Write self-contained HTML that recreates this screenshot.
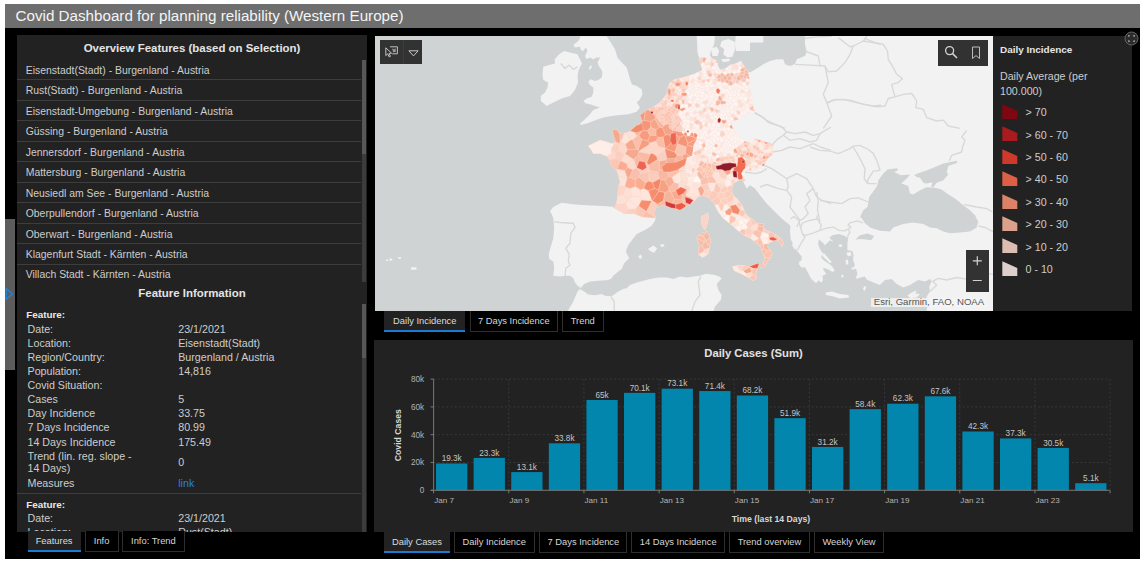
<!DOCTYPE html>
<html><head><meta charset="utf-8"><title>Covid Dashboard</title><style>
html,body{margin:0;padding:0;background:#fff;}
body{width:1146px;height:565px;overflow:hidden;position:relative;font-family:"Liberation Sans", sans-serif;color:#cfcfcf;}
.abs{position:absolute;}
#frame{position:absolute;left:5px;top:4px;width:1135px;height:555px;background:#000;overflow:hidden;}
#hdr{position:absolute;left:0;top:0;width:1135px;height:23.5px;background:#6e6e6e;}
#hdr span{position:absolute;left:10.5px;top:2px;font-size:15.2px;line-height:19px;color:#f4f4f4;white-space:nowrap;}
.panel{position:absolute;background:#222;}
.t{position:absolute;white-space:nowrap;}
.li{position:absolute;left:0;width:344px;height:19.47px;border-bottom:1px solid #3d3d3d;}
.li span{position:absolute;left:8.7px;top:4.9px;font-size:10.45px;line-height:12px;color:#cdcdcd;white-space:nowrap;}
.tab{position:absolute;box-sizing:border-box;height:21px;border:1px solid #2e2e2e;border-top:none;background:#000;color:#d6d6d6;font-size:9.35px;line-height:20.5px;text-align:center;white-space:nowrap;}
.tab.on{background:#222;border:none;border-bottom:2px solid #1c7ad0;color:#dcdcdc;}
.fl{position:absolute;left:10.5px;font-size:10.7px;line-height:12px;color:#cdcdcd;white-space:nowrap;}
.fv{position:absolute;left:161.2px;font-size:10.7px;line-height:12px;color:#cdcdcd;white-space:nowrap;}
.fb{position:absolute;left:9.2px;font-size:9.9px;line-height:12px;color:#e8e8e8;font-weight:bold;white-space:nowrap;}
</style></head><body>
<div id="frame">
<div id="hdr"><span>Covid Dashboard for planning reliability (Western Europe)</span></div>
<div class="abs" style="left:0;top:215px;width:10px;height:151px;background:#5c5c5c;"></div>
<svg class="abs" style="left:0;top:283px" width="10" height="14" viewBox="0 0 10 14"><path d="M1.2 1.5 L7.5 7 L1.2 12.5 Z" fill="none" stroke="#1f86e0" stroke-width="1.2"/></svg>
<div class="panel" style="left:12px;top:31px;width:350px;height:496.5px;overflow:hidden;">
<div class="t" style="left:0;width:350px;text-align:center;top:6px;font-size:11.45px;line-height:14px;font-weight:bold;color:#e4e4e4;">Overview Features (based on Selection)</div>
<div class="li" style="top:24.90px;"><span>Eisenstadt(Stadt) - Burgenland - Austria</span></div>
<div class="li" style="top:45.37px;"><span>Rust(Stadt) - Burgenland - Austria</span></div>
<div class="li" style="top:65.84px;"><span>Eisenstadt-Umgebung - Burgenland - Austria</span></div>
<div class="li" style="top:86.31px;"><span>Güssing - Burgenland - Austria</span></div>
<div class="li" style="top:106.78px;"><span>Jennersdorf - Burgenland - Austria</span></div>
<div class="li" style="top:127.25px;"><span>Mattersburg - Burgenland - Austria</span></div>
<div class="li" style="top:147.72px;"><span>Neusiedl am See - Burgenland - Austria</span></div>
<div class="li" style="top:168.19px;"><span>Oberpullendorf - Burgenland - Austria</span></div>
<div class="li" style="top:188.66px;"><span>Oberwart - Burgenland - Austria</span></div>
<div class="li" style="top:209.13px;"><span>Klagenfurt Stadt - Kärnten - Austria</span></div>
<div class="li" style="top:229.60px;border-bottom:none;"><span>Villach Stadt - Kärnten - Austria</span></div>
<div class="abs" style="left:344.6px;top:24.5px;width:4.8px;height:222.5px;background:#3c3c3c;"></div>
<div class="abs" style="left:344.6px;top:24.5px;width:4.8px;height:94.5px;background:#575757;"></div>
<div class="t" style="left:0;width:350px;text-align:center;top:251px;font-size:11.45px;line-height:14px;font-weight:bold;color:#e4e4e4;">Feature Information</div>
<div class="abs" style="left:344.6px;top:269px;width:4.8px;height:228px;background:#3c3c3c;"></div>
<div class="abs" style="left:344.6px;top:269px;width:4.8px;height:54px;background:#575757;"></div>
<div class="fb" style="top:274.00px">Feature:</div>
<div class="fl" style="top:287.50px">Date:</div>
<div class="fv" style="top:287.50px;">23/1/2021</div>
<div class="fl" style="top:301.60px">Location:</div>
<div class="fv" style="top:301.60px;">Eisenstadt(Stadt)</div>
<div class="fl" style="top:315.70px">Region/Country:</div>
<div class="fv" style="top:315.70px;">Burgenland / Austria</div>
<div class="fl" style="top:329.80px">Population:</div>
<div class="fv" style="top:329.80px;">14,816</div>
<div class="fl" style="top:343.90px">Covid Situation:</div>
<div class="fl" style="top:358.00px">Cases</div>
<div class="fv" style="top:358.00px;">5</div>
<div class="fl" style="top:372.20px">Day Incidence</div>
<div class="fv" style="top:372.20px;">33.75</div>
<div class="fl" style="top:386.40px">7 Days Incidence</div>
<div class="fv" style="top:386.40px;">80.99</div>
<div class="fl" style="top:400.60px">14 Days Incidence</div>
<div class="fv" style="top:400.60px;">175.49</div>
<div class="fl" style="top:415.20px">Trend (lin. reg. slope -</div>
<div class="fl" style="top:427.30px">14 Days)</div>
<div class="fv" style="top:420.80px">0</div>
<div class="fl" style="top:441.80px">Measures</div>
<div class="fv" style="top:441.80px;color:#2a7fe6;">link</div>
<div class="abs" style="left:0;top:458.3px;width:344px;height:1px;background:#3d3d3d;"></div>
<div class="fb" style="top:464.00px">Feature:</div>
<div class="fl" style="top:477.20px">Date:</div>
<div class="fv" style="top:477.20px;">23/1/2021</div>
<div class="fl" style="top:491.30px">Location:</div>
<div class="fv" style="top:491.30px;">Rust(Stadt)</div>
</div>
<div class="tab on" style="left:22.60px;top:527.00px;width:53.00px;">Features</div>
<div class="tab" style="left:79.50px;top:527.00px;width:34.20px;">Info</div>
<div class="tab" style="left:117.20px;top:527.00px;width:62.40px;">Info: Trend</div>
<div class="abs" id="map" style="left:370px;top:31.7px;width:618.4px;height:275.3px;background:#cfd3d4;overflow:hidden;">
<svg class="abs" style="left:0;top:0" width="619" height="275.3" viewBox="375 35.7 619 275.3">
<path d="M727.5,57.3 732.5,56.5 735.0,49.0 734.7,41.5 728.3,38.7 721.7,40.7 720.0,45.7 724.2,49.0 723.3,54.0ZM712.3,47.8 714.2,44.0 715.0,35.0 696.7,35.0 697.2,45.0 697.5,52.0 699.0,57.5 700.0,62.0 701.5,66.0 702.5,70.0 698.3,71.7 693.3,74.2 687.5,75.8 681.7,77.5 674.2,79.2 670.0,82.5 667.5,87.5 666.7,93.3 662.5,99.2 658.3,103.3 651.7,107.5 646.7,110.0 640.0,115.0 642.5,121.7 636.7,125.0 630.0,130.8 626.7,132.5 620.0,133.3 617.5,130.0 612.5,129.2 613.3,134.2 615.8,141.7 610.8,143.3 606.7,141.7 600.0,140.0 593.3,143.3 588.3,145.8 591.7,150.0 593.3,153.3 600.0,153.3 606.7,155.8 610.0,160.8 610.8,165.0 616.7,170.0 618.3,175.0 620.0,181.7 618.3,186.7 617.5,195.0 616.7,201.7 615.0,206.7 603.3,205.8 586.7,205.0 575.0,204.2 561.7,202.5 553.3,206.7 550.0,210.8 551.7,214.0 553.3,218.0 554.2,228.0 553.3,238.0 550.8,246.3 548.7,253.8 549.2,258.8 553.3,261.3 554.2,268.0 553.3,275.5 560.0,276.3 565.0,275.5 570.0,275.5 573.3,278.0 575.0,282.2 577.5,285.5 580.8,287.7 584.2,283.8 590.0,281.3 598.3,280.5 606.7,280.0 610.8,278.8 613.3,275.5 618.3,271.3 621.7,268.8 624.2,263.0 629.2,258.0 625.8,251.3 628.3,244.7 633.3,238.0 636.7,233.8 645.0,229.7 651.7,225.5 655.0,220.5 655.8,218.0 654.2,213.3 655.8,207.5 661.7,205.0 666.7,205.8 673.3,208.3 680.0,210.0 685.0,206.7 690.0,204.2 695.0,200.0 697.5,196.7 702.5,195.0 708.3,197.5 713.3,201.7 715.8,206.7 718.3,211.7 723.3,218.3 723.3,218.0 731.7,224.7 738.3,230.5 745.0,235.5 751.7,238.8 755.8,243.0 760.8,246.3 762.5,253.0 765.0,258.0 763.3,263.0 760.0,266.3 760.8,268.0 764.2,267.2 767.5,261.3 770.8,257.2 772.5,253.0 770.0,249.7 767.5,246.3 768.3,243.0 773.3,240.5 776.7,239.7 780.0,243.0 782.5,246.3 783.3,243.0 780.0,237.2 775.0,233.8 770.0,231.3 765.0,229.7 763.3,225.5 764.2,223.0 758.3,223.8 755.0,221.3 752.5,219.3 746.7,215.0 744.2,210.0 741.7,204.2 736.7,198.3 733.3,195.0 731.7,190.0 733.3,183.3 738.3,180.0 742.0,179.2 746.7,188.3 750.0,185.0 755.0,188.3 760.0,195.0 766.7,203.3 773.3,210.0 781.7,218.3 790.0,225.0 790.5,226.2 790.0,230.0 790.6,238.7 793.7,244.9 797.5,251.2 801.8,256.2 801.3,260.7 801.2,260.5 798.7,261.8 799.3,263.1 798.7,263.7 801.8,267.4 805.0,266.8 808.7,273.6 811.2,278.6 816.2,283.0 818.7,279.9 821.2,282.4 823.0,279.9 822.4,275.5 826.2,273.6 823.7,269.9 823.0,267.4 827.4,268.7 832.4,271.8 834.9,269.9 831.2,264.9 828.0,263.0 823.7,259.9 821.2,257.4 822.1,253.8 822.4,255.6 826.2,259.3 829.9,263.0 831.8,261.8 828.0,257.4 824.3,253.1 822.4,252.6 822.4,252.4 819.9,248.7 818.1,243.7 818.7,239.3 823.0,242.5 824.9,244.9 826.8,243.1 829.9,240.0 833.7,241.8 829.3,237.5 832.4,235.0 838.6,233.7 844.9,235.6 848.0,238.1 847.4,243.7 847.4,249.9 852.4,250.6 853.6,254.9 853.0,259.9 854.9,264.3 853.8,267.0 851.1,267.4 851.7,269.3 855.5,268.7 855.4,268.3 856.1,268.7 857.4,273.6 855.5,278.6 859.9,277.4 864.9,276.1 867.3,279.9 868.3,280.0 873.3,282.2 880.0,284.7 885.0,279.7 891.7,278.8 896.7,283.8 903.3,287.2 910.0,284.7 918.3,279.7 925.0,281.3 930.0,278.8 931.7,281.3 929.2,286.3 930.0,291.3 926.7,296.3 927.5,304.7 926.7,311.3 994.0,312.0 994.0,35.0 805.0,35.0 805.0,44.0 806.7,51.5 805.0,55.7 796.7,59.0 795.0,63.7 790.0,65.7 785.0,64.0 783.3,59.0 776.7,59.0 770.0,60.7 763.3,64.0 756.7,68.2 750.0,72.3 747.5,70.7 743.3,64.8 740.8,60.7 738.3,62.3 734.2,64.0 730.0,64.8 725.8,68.2 720.0,69.8 717.5,64.8 718.3,60.7 713.3,59.0 710.0,55.7 710.8,50.7 711.2,49.9 712.5,55.7 717.5,55.7 719.2,50.7 716.7,46.5ZM943.3,163.3 956.7,160.5 957.5,162.5 948.3,165.8 946.7,171.7 948.3,174.2 943.3,180.0 936.7,182.5 933.3,186.7 931.3,186.7 932.5,182.0 926.7,183.3 923.3,182.5 920.0,177.5 916.7,176.7 914.2,174.7 918.3,173.0 925.0,170.8 933.3,167.5ZM900.8,175.0 910.0,174.2 906.7,178.3 901.3,183.3 908.3,185.8 910.0,193.3 913.3,194.2 920.0,190.0 926.7,187.0 935.0,187.5 941.7,189.2 948.3,194.2 955.0,198.3 963.3,205.0 970.0,210.0 975.0,215.0 977.5,220.0 978.3,221.3 976.7,227.2 970.0,231.3 960.0,232.2 950.0,233.0 943.3,231.3 936.7,228.0 930.0,227.2 923.3,223.8 913.3,222.2 903.3,223.8 893.3,227.2 890.0,231.3 880.0,230.5 870.0,227.2 865.0,223.0 861.7,218.0 860.0,216.7 863.3,210.0 867.5,206.7 869.2,196.7 874.2,190.0 877.5,185.0 878.3,180.0 883.3,173.3 887.5,169.2 896.7,168.0 898.3,169.7 894.2,171.7ZM871.1,240.0 861.1,238.7 855.5,239.3 859.9,235.0 867.3,233.1 874.2,235.6ZM723.3,62.0 730.0,60.7 729.2,58.2 720.8,59.0ZM590.0,69.8 592.0,66.5 590.8,64.8 588.7,68.2ZM543.3,66.5 542.5,74.0 543.3,79.8 548.3,82.3 547.5,87.3 545.0,92.3 540.8,95.7 540.8,100.7 546.7,105.7 553.3,102.3 561.7,98.2 570.0,95.7 575.0,89.8 578.0,82.3 577.5,75.7 578.7,69.8 582.0,63.2 577.5,54.0 570.0,52.3 564.2,50.7 559.2,54.0 554.7,59.0 555.0,63.2 549.2,64.8ZM580.0,46.5 580.8,49.8 583.3,50.7 585.8,47.3 587.5,50.7 585.0,55.7 586.7,59.0 590.0,57.3 593.3,59.0 596.7,57.3 600.0,57.3 597.5,62.3 599.2,66.5 601.7,69.8 602.5,73.2 601.7,77.3 598.3,79.8 595.0,80.7 590.8,79.0 588.3,81.5 590.0,84.8 593.3,87.3 593.3,92.3 591.7,96.5 586.7,98.2 583.3,100.7 585.8,103.2 590.0,104.0 595.0,105.7 600.0,107.3 593.3,109.8 590.0,114.0 585.0,119.0 580.0,123.2 580.8,124.8 586.7,123.2 593.3,120.7 598.3,119.0 603.3,117.3 611.7,115.7 620.0,114.8 628.3,114.0 636.7,111.5 640.0,107.3 636.7,102.3 640.0,99.0 642.5,94.0 641.7,89.0 636.7,85.7 631.7,84.0 629.2,75.7 626.7,67.3 621.7,62.3 617.5,57.3 615.0,49.0 610.8,42.3 606.7,36.0 580.0,36.0 580.0,38.2 577.5,41.5 573.3,44.8 575.0,47.3ZM708.7,218.3 708.0,211.7 706.7,213.3 701.7,215.8 700.8,221.7 702.5,226.7 705.3,230.0 707.5,223.3ZM709.2,248.8 710.8,239.7 707.5,231.3 703.3,232.2 696.7,236.3 699.2,244.7 698.3,253.8 702.5,257.2 708.3,253.8ZM661.3,246.7 664.7,246.0 663.3,243.8 660.0,244.3ZM648.0,248.8 650.8,251.3 654.2,252.5 657.2,248.0 653.3,245.2ZM640.0,259.3 642.2,256.7 640.8,254.3 638.3,256.0ZM398.5,258.8 401.0,258.5 401.0,256.8 398.0,257.0ZM389.5,260.5 392.5,260.0 392.0,258.2 389.0,258.5ZM386.0,260.8 388.0,260.8 388.0,259.3 386.0,259.5ZM411.0,269.5 416.5,269.5 416.5,267.0 411.0,267.0ZM750.0,42.3 763.3,42.3 763.3,35.0 735.8,35.0 735.0,44.0 735.8,50.7 750.0,50.7ZM839.3,246.8 842.1,246.4 841.8,243.9 838.6,244.3ZM794.3,249.3 795.6,248.7 793.1,243.7 791.9,244.3ZM848.0,256.2 851.7,254.9 850.5,251.8 846.1,252.4ZM846.1,264.3 848.4,264.3 848.0,259.3 845.5,259.9ZM756.7,278.0 755.8,273.8 757.5,268.0 759.2,263.0 755.8,263.8 748.3,266.3 740.0,264.7 732.5,266.3 734.2,270.5 740.0,273.0 746.7,276.3 753.3,280.5ZM841.8,277.4 843.6,276.8 843.0,274.3 841.1,274.9ZM864.2,291.3 866.3,287.2 865.0,285.5 863.0,288.0ZM720.8,299.7 721.7,294.7 718.3,289.7 716.7,283.8 721.7,278.0 719.2,276.3 715.0,274.7 708.3,273.8 705.0,273.8 700.0,275.5 693.3,276.3 686.7,277.2 680.0,276.3 673.3,278.8 666.7,277.2 658.3,277.2 650.0,278.8 643.3,280.5 636.7,282.2 630.0,284.7 626.7,288.0 623.3,288.8 618.3,291.3 611.7,296.0 605.0,295.5 601.7,293.8 595.0,295.0 588.3,294.3 584.2,291.3 580.0,288.8 577.5,291.3 573.3,301.3 567.5,311.3 560.0,312.0 994.0,312.0 713.3,311.3 715.0,306.3ZM916.7,290.0 911.7,292.2 907.5,295.0 910.0,297.7 916.7,297.2 920.0,293.8 915.3,293.3ZM848.3,294.7 840.0,293.8 831.7,291.3 825.8,292.2 825.8,294.7 831.7,295.8 840.0,298.3 849.2,297.2Z" fill="#f2f2f2"/>
<g fill="none" stroke="#d8d8d6" stroke-width="1.35" stroke-linejoin="round">
<polyline points="554.2,221.3 560.0,222.2 573.3,223.0 575.0,227.2 570.8,233.0 570.0,243.0 565.8,248.0 569.2,253.8 568.3,261.3 570.0,264.7 565.8,268.0 565.0,275.5"/>
<polyline points="610.8,296.0 614.2,301.3 614.2,311.3"/>
<polyline points="700.8,276.3 698.3,281.3 700.0,294.7 695.0,301.3 691.7,311.3"/>
<polyline points="560.8,63.2 565.0,68.2 569.2,64.8 573.3,69.0 577.5,66.5"/>
<polyline points="754.2,112.3 763.3,117.3 768.3,122.3 776.7,124.8 785.0,128.0"/>
<polyline points="795.0,64.0 810.0,64.8 825.0,65.7 828.3,82.3 823.3,94.0 826.7,102.3 831.7,115.7 823.3,128.0"/>
<polyline points="805.0,50.7 818.3,55.7 820.0,64.8"/>
<polyline points="825.0,65.7 828.3,71.5 836.7,70.7 845.0,62.3 850.0,54.0 853.3,45.7 863.3,40.7 866.7,36.0"/>
<polyline points="805.0,38.2 816.7,36.5 831.7,36.0"/>
<polyline points="838.3,37.3 850.0,46.5 853.3,45.7"/>
<polyline points="826.7,102.3 836.7,99.0 850.0,99.8 863.3,104.0 873.3,105.7 881.0,104.8"/>
<polyline points="863.3,40.7 873.3,42.3 881.0,44.0"/>
<polyline points="865.0,38.2 875.0,42.3 883.3,44.0 887.5,50.7 888.3,59.0 893.3,67.3 896.7,74.0 902.5,78.2 898.3,82.3 891.7,84.0 893.3,90.7 895.0,96.5"/>
<polyline points="827.5,103.2 832.5,99.8 843.3,99.0 856.7,102.3 868.3,104.8 876.7,106.5 885.0,105.7 888.3,98.2 895.0,96.5 903.3,94.0 911.7,93.2 916.7,100.7 915.8,107.3 923.3,109.0 926.7,117.3 936.7,120.7 943.3,119.8 948.3,125.7 960.0,128.0"/>
<polyline points="966.7,130.0 961.7,136.7 965.0,140.0 962.5,146.7 961.7,151.7 951.7,155.0 949.2,160.8"/>
<polyline points="810.0,146.7 820.0,150.0 830.0,150.8 838.3,153.3 850.0,148.3 853.3,145.8 860.0,145.0 868.3,149.2 873.3,153.3 876.7,160.0 880.0,170.0 873.3,170.8 867.5,180.0 868.3,183.3 876.7,183.3"/>
<polyline points="853.3,146.7 860.0,158.3 865.0,168.3 864.2,178.3 867.5,183.3"/>
<polyline points="820.0,200.0 830.0,201.7 841.7,203.3 850.0,198.3 858.3,197.5 868.3,201.7"/>
<polyline points="816.7,191.7 818.3,200.0 817.5,210.0 820.0,221.7"/>
<polyline points="964.2,204.2 976.7,206.7 986.7,208.3 992.5,211.7"/>
<polyline points="754.2,111.7 760.0,115.0 766.7,120.0 773.3,123.3 781.7,126.7 786.7,131.7 783.3,135.0 778.3,138.3 773.3,143.3 771.7,146.7"/>
<polyline points="786.7,131.7 795.0,133.3 805.0,131.7 813.3,135.0 820.0,133.3 831.0,126.7"/>
<polyline points="783.3,135.0 790.0,140.0 800.0,138.3 810.0,141.7 816.7,140.0 820.0,133.3"/>
<polyline points="772.5,151.7 781.7,150.0 790.0,146.7 800.0,148.3 813.3,143.3 820.0,146.7 831.0,150.0"/>
<polyline points="764.2,165.0 771.7,168.3 781.7,175.0 786.7,178.3 796.7,173.3 806.7,178.3 813.3,188.3 816.7,196.7 821.7,200.0 831.0,203.3"/>
<polyline points="760.0,186.7 766.7,184.2 778.3,188.3 786.7,190.0 791.7,196.7 790.0,206.7 795.0,213.3 800.0,220.0 796.7,226.7"/>
<polyline points="786.7,178.3 788.3,186.7 786.7,190.0"/>
<polyline points="745.0,171.7 755.0,173.3 761.7,171.7 766.7,168.3"/>
<polyline points="813.3,188.3 806.7,193.3 810.0,200.0 805.0,206.7 808.3,213.3 803.3,218.3 800.0,220.0"/>
<polyline points="790.6,218.7 793.7,216.2 798.7,220.0 800.6,227.5 802.5,233.7 805.0,236.8 800.6,243.7 797.5,249.9"/>
<polyline points="800.6,227.5 802.5,222.5 809.9,220.0 817.4,218.7 821.2,225.0 819.9,230.0 812.4,233.1 805.0,235.0 802.5,233.7"/>
<polyline points="819.9,230.0 827.4,227.5 833.7,226.9 838.6,230.0 844.9,230.6 848.0,228.7 851.1,226.9 848.0,225.0 849.9,222.5 857.4,220.6 863.0,222.5"/>
<polyline points="817.4,218.7 816.8,215.0"/>
<polyline points="848.0,228.7 849.9,231.8 848.0,235.0 847.4,238.1"/>
<polyline points="932.5,281.0 938.3,278.0 946.7,279.7 956.7,277.2 966.7,278.8 976.7,274.7 986.7,273.0 993.0,273.8"/>
<polyline points="978.3,225.5 985.0,227.2 993.0,231.3"/>
<polyline points="930.0,291.3 936.7,284.7 932.5,281.0"/>
</g>
<path d="M692.7,197.5 686.4,195.2 687.2,191.0 684.3,186.3 688.1,182.1 687.7,176.6 685.6,170.5 679.6,173.0 679.6,168.7 686.0,163.1 687.2,157.5 692.3,155.7 694.0,144.3 697.4,138.3 690.6,135.7 685.1,135.7 681.8,131.8 677.1,130.8 673.7,130.1 669.1,127.5 669.1,122.9 663.6,124.9 658.9,120.3 654.3,114.5 649.6,110.4 648.2,109.2 646.7,110.0 640.0,115.0 642.5,121.7 636.7,125.0 630.0,130.8 626.7,132.5 620.0,133.3 617.5,130.0 612.5,129.2 613.3,134.2 615.8,141.7 610.8,143.3 606.7,141.7 600.0,140.0 593.3,143.3 588.3,145.8 591.7,150.0 593.3,153.3 600.0,153.3 606.7,155.8 610.0,160.8 610.8,165.0 616.7,170.0 618.3,175.0 620.0,181.7 618.3,186.7 617.5,195.0 616.7,201.7 615.0,206.7 612.6,206.5 613.1,206.9 623.9,213.3 634.0,213.3 642.5,216.7 654.9,217.5 655.5,219.0 655.8,218.0 654.2,213.3 655.8,207.5 661.7,205.0 666.7,205.8 673.3,208.3 680.0,210.0 685.0,206.7 690.0,204.2 691.5,202.9 691.5,201.7Z" fill="#f9c0ab"/>
<g stroke="#fcd9cc" stroke-width="0.35">
<path d="M652.2,152.9 652.3,150.5 649.1,144.3 638.9,150.8 639.0,151.6 649.9,154.0Z" fill="#fcd8cb"/>
<path d="M631.3,196.5 628.5,199.3 637.8,206.2 638.6,205.8 641.6,199.7 639.8,195.7Z" fill="#ffe6dd"/>
<path d="M677.3,143.4 686.0,146.7 687.5,144.8 687.9,143.1 685.2,135.7 685.1,135.7 684.5,135.0 679.8,136.9 677.2,143.2Z" fill="#f59476"/>
<path d="M625.5,203.3 628.2,199.4 623.1,194.4 617.5,195.2 616.7,201.7 615.8,204.4Z" fill="#fce1d6"/>
<path d="M665.5,148.2 665.0,147.6 658.5,146.1 652.3,150.5 652.2,152.9 656.5,155.9 665.1,149.6 665.5,148.3Z" fill="#ffd7c8"/>
<path d="M643.9,120.0 650.7,121.6 654.9,118.4 655.9,116.5 654.3,114.5 649.6,110.4 648.2,109.2 646.7,110.0 645.2,111.1Z" fill="#f7a287"/>
<path d="M656.5,155.9 657.5,159.3 659.3,160.9 665.8,159.7 666.9,158.2 665.1,149.6Z" fill="#f8d0c1"/>
<path d="M627.0,177.6 627.3,177.4 624.8,170.1 617.2,168.8 616.2,169.6 616.7,170.0 618.3,175.0 618.7,176.5Z" fill="#fbe2d8"/>
<path d="M632.5,139.4 636.5,148.8 638.2,149.9 642.1,139.2 639.0,135.5 636.8,135.8Z" fill="#fabeaa"/>
<path d="M668.8,187.7 668.6,190.6 671.3,192.0 678.9,189.1 678.6,183.1 674.2,182.1Z" fill="#f9bca7"/>
<path d="M638.6,205.8 645.9,211.0 646.7,211.0 652.0,200.5 641.6,199.7Z" fill="#f88d6d"/>
<path d="M665.6,134.5 663.0,136.8 665.0,147.6 665.5,148.2 672.4,141.9 669.8,134.3Z" fill="#f48e71"/>
<path d="M635.4,186.3 630.2,188.2 631.3,196.5 639.8,195.7 640.9,189.6Z" fill="#ffe5dc"/>
<path d="M678.8,172.2 668.7,167.4 666.7,169.3 668.9,176.5 672.1,177.0Z" fill="#fac0ac"/>
<path d="M666.7,169.3 659.9,169.4 657.6,171.5 659.4,178.5 660.9,179.6 664.7,180.1 668.9,176.5Z" fill="#f9b8a2"/>
<path d="M657.5,159.3 656.5,155.9 652.2,152.9 649.9,154.0 646.6,162.7 648.8,165.0Z" fill="#f58a6a"/>
<path d="M635.1,179.3 635.4,186.3 640.9,189.6 643.8,188.2 645.8,182.7 639.0,176.7Z" fill="#faad92"/>
<path d="M627.0,177.6 624.9,185.7 626.1,187.2 630.2,188.2 635.4,186.3 635.1,179.3 629.8,177.0 627.3,177.4Z" fill="#fbae93"/>
<path d="M625.5,203.3 628.2,209.5 636.0,208.4 637.8,206.2 628.5,199.3 628.2,199.4Z" fill="#fde4dc"/>
<path d="M683.8,204.8 683.4,200.8 681.8,199.2 674.4,199.0 671.1,204.4 671.4,207.6 673.3,208.3 674.6,208.6Z" fill="#f9b69f"/>
<path d="M618.5,150.6 615.6,151.8 615.8,158.4 620.0,161.1 620.8,160.7 624.7,153.9Z" fill="#fbcebf"/>
<path d="M617.2,168.8 620.0,161.1 615.8,158.4 609.0,159.4 610.0,160.8 610.8,165.0 616.2,169.6Z" fill="#fbc7b5"/>
<path d="M647.7,140.6 649.2,142.9 655.7,141.1 658.1,137.0 656.0,134.9 649.9,134.9Z" fill="#f69f83"/>
<path d="M627.9,167.3 624.8,170.1 627.3,177.4 629.8,177.0 632.8,169.3Z" fill="#f6a98e"/>
<path d="M649.1,171.5 640.3,172.9 639.0,176.7 645.8,182.7 648.8,180.7Z" fill="#fac6b4"/>
<path d="M681.8,199.2 683.4,200.8 692.2,197.3 686.4,195.2 687.2,191.0 686.3,189.5 682.6,191.1Z" fill="#f9bca7"/>
<path d="M633.1,158.9 633.7,158.9 638.0,155.2 639.0,151.6 638.9,150.8 638.2,149.9 636.5,148.8 627.4,149.2 625.1,153.7Z" fill="#f6a98e"/>
<path d="M606.6,150.9 603.7,144.9 595.7,145.3 592.9,152.5 593.3,153.3 600.0,153.3 604.7,155.1Z" fill="#fcdcd0"/>
<path d="M656.0,129.5 659.7,127.0 654.9,118.4 650.7,121.6 650.6,127.1Z" fill="#f7a488"/>
<path d="M615.6,151.8 618.5,150.6 619.5,144.4 613.5,144.4 610.7,149.7Z" fill="#fbd0c1"/>
<path d="M636.5,167.9 636.9,168.1 644.7,162.4 638.0,155.2 633.7,158.9Z" fill="#f9b9a3"/>
<path d="M625.4,143.9 631.2,139.4 625.1,132.7 624.0,132.8 621.0,140.7 621.6,142.5Z" fill="#fee5db"/>
<path d="M650.7,121.6 643.9,120.0 642.2,120.8 642.5,121.7 639.5,123.4 642.4,130.3 647.4,130.4 650.6,127.1Z" fill="#f69577"/>
<path d="M646.7,211.0 645.9,211.0 641.8,216.5 642.5,216.7 654.9,217.5 655.5,219.0 655.8,218.0 655.7,217.6Z" fill="#fabfaa"/>
<path d="M681.3,180.8 678.6,183.1 678.9,189.1 682.6,191.1 686.3,189.5 684.3,186.3 687.1,183.2Z" fill="#f9dfd6"/>
<path d="M640.9,189.6 639.8,195.7 641.6,199.7 652.0,200.5 652.1,200.5 648.5,190.5 643.8,188.2Z" fill="#ffe6dd"/>
<path d="M687.5,144.8 686.0,146.7 685.5,153.2 691.0,156.2 692.3,155.7 693.7,146.5Z" fill="#f69c80"/>
<path d="M677.3,155.2 675.1,158.1 675.1,161.8 680.4,168.1 683.4,165.4 682.3,154.9Z" fill="#f9b69f"/>
<path d="M664.8,192.2 659.0,190.6 652.3,200.5 657.5,204.0 663.5,200.4Z" fill="#f58a6a"/>
<path d="M665.8,159.7 668.7,167.2 675.1,161.8 675.1,158.1 666.9,158.2Z" fill="#f8ac93"/>
<path d="M636.0,208.4 628.2,209.5 626.3,213.3 634.0,213.3 636.4,214.2Z" fill="#fbcebe"/>
<path d="M671.9,132.7 673.1,129.7 669.1,127.5 669.1,122.9 664.7,124.5 662.3,127.4 665.6,134.5 669.8,134.3Z" fill="#f7a388"/>
<path d="M671.9,132.7 679.8,136.9 684.5,135.0 681.8,131.8 677.1,130.8 673.7,130.1 673.1,129.7Z" fill="#f89779"/>
<path d="M621.6,142.5 621.0,140.7 614.2,136.7 615.8,141.7 612.7,142.7 613.5,144.4 619.5,144.4Z" fill="#fcd7ca"/>
<path d="M620.8,160.7 627.2,163.7 633.1,158.9 625.1,153.7 624.7,153.9Z" fill="#fcddd2"/>
<path d="M657.5,204.0 652.3,200.5 652.1,200.5 652.0,200.5 646.7,211.0 655.7,217.6 654.2,213.3 655.8,207.5 658.2,206.5Z" fill="#fbcfc0"/>
<path d="M650.1,170.4 648.8,165.0 646.6,162.7 644.7,162.4 636.9,168.1 640.3,172.9 649.1,171.5Z" fill="#fbcebf"/>
<path d="M636.8,135.8 639.0,135.5 642.4,130.3 639.5,123.4 636.7,125.0 631.7,129.3Z" fill="#f9bba6"/>
<path d="M620.0,161.1 617.2,168.8 624.8,170.1 627.9,167.3 627.2,163.7 620.8,160.7Z" fill="#f9ac91"/>
<path d="M659.9,169.4 659.3,160.9 657.5,159.3 648.8,165.0 650.1,170.4 657.6,171.5Z" fill="#f9bca7"/>
<path d="M645.9,211.0 638.6,205.8 637.8,206.2 636.0,208.4 636.4,214.2 641.8,216.5Z" fill="#fbc8b6"/>
<path d="M671.1,204.4 663.5,200.4 657.5,204.0 658.2,206.5 661.7,205.0 666.7,205.8 671.4,207.6Z" fill="#f9baa4"/>
<path d="M687.9,143.1 697.2,138.2 690.6,135.7 685.2,135.7Z" fill="#f89779"/>
<path d="M603.7,144.9 606.6,150.9 610.7,149.7 613.5,144.4 612.7,142.7 610.8,143.3 606.7,141.7 604.8,141.2Z" fill="#fef1ed"/>
<path d="M595.7,145.3 594.4,142.8 593.3,143.3 588.3,145.8 591.7,150.0 592.9,152.5Z" fill="#fef1ed"/>
<path d="M648.8,180.7 645.8,182.7 643.8,188.2 648.5,190.5 654.7,188.2 652.5,181.9Z" fill="#f88d6d"/>
<path d="M642.4,130.3 639.0,135.5 642.1,139.2 647.7,140.6 649.9,134.9 647.4,130.4Z" fill="#f69b7f"/>
<path d="M627.9,167.3 632.8,169.3 636.5,167.9 633.7,158.9 633.1,158.9 627.2,163.7Z" fill="#fcdbce"/>
<path d="M624.0,132.8 620.0,133.3 617.5,130.0 612.5,129.2 613.3,134.2 614.2,136.7 621.0,140.7Z" fill="#fac2af"/>
<path d="M625.1,153.7 627.4,149.2 625.4,143.9 621.6,142.5 619.5,144.4 618.5,150.6 624.7,153.9Z" fill="#fcd9cc"/>
<path d="M668.9,176.5 664.7,180.1 668.8,187.7 674.2,182.1 672.1,177.0Z" fill="#f8ae96"/>
<path d="M632.5,139.4 631.2,139.4 625.4,143.9 627.4,149.2 636.5,148.8Z" fill="#f5a88d"/>
<path d="M681.3,180.8 687.1,183.2 688.1,182.1 687.7,176.6 685.6,170.5 680.6,172.6Z" fill="#fce1d7"/>
<path d="M671.3,192.0 668.6,190.6 664.8,192.2 663.5,200.4 671.1,204.4 674.4,199.0Z" fill="#f8b39b"/>
<path d="M664.7,180.1 660.9,179.6 658.5,189.9 659.0,190.6 664.8,192.2 668.6,190.6 668.8,187.7Z" fill="#f6a084"/>
<path d="M654.7,188.2 658.5,189.9 660.9,179.6 659.4,178.5 652.5,181.9Z" fill="#f38868"/>
<path d="M623.1,194.4 626.1,187.2 624.9,185.7 618.8,185.2 618.3,186.7 617.5,195.0 617.5,195.2Z" fill="#fcd6c8"/>
<path d="M658.1,137.0 655.7,141.1 658.5,146.1 665.0,147.6 663.0,136.8Z" fill="#f9bda9"/>
<path d="M665.1,149.6 666.9,158.2 675.1,158.1 677.3,155.2 674.9,151.7 665.5,148.3Z" fill="#f19072"/>
<path d="M683.4,165.4 686.0,163.1 687.2,157.5 691.0,156.2 685.5,153.2 682.3,154.9Z" fill="#f7a58a"/>
<path d="M631.7,129.3 630.0,130.8 626.7,132.5 625.1,132.7 631.2,139.4 632.5,139.4 636.8,135.8Z" fill="#fbe2d8"/>
<path d="M687.9,143.1 687.5,144.8 693.7,146.5 694.0,144.3 697.4,138.3 697.2,138.2Z" fill="#fa997b"/>
<path d="M615.8,158.4 615.6,151.8 610.7,149.7 606.6,150.9 604.7,155.1 606.7,155.8 609.0,159.4Z" fill="#fcd7ca"/>
<path d="M671.3,192.0 674.4,199.0 681.8,199.2 682.6,191.1 678.9,189.1Z" fill="#f8ab91"/>
<path d="M658.5,146.1 655.7,141.1 649.2,142.9 649.1,144.3 652.3,150.5Z" fill="#ffd7c8"/>
<path d="M654.9,118.4 659.7,127.0 662.3,127.4 664.7,124.5 663.6,124.9 658.9,120.3 655.9,116.5Z" fill="#f9b59e"/>
<path d="M674.6,208.6 680.0,210.0 685.0,206.7 685.0,206.7 683.8,204.8Z" fill="#f9baa5"/>
<path d="M659.4,178.5 657.6,171.5 650.1,170.4 649.1,171.5 648.8,180.7 652.5,181.9Z" fill="#fbccbc"/>
<path d="M662.3,127.4 659.7,127.0 656.0,129.5 656.0,134.9 658.1,137.0 663.0,136.8 665.6,134.5Z" fill="#f69577"/>
<path d="M643.9,120.0 645.2,111.1 640.0,115.0 642.2,120.8Z" fill="#f5977a"/>
<path d="M638.2,149.9 638.9,150.8 649.1,144.3 649.2,142.9 647.7,140.6 642.1,139.2Z" fill="#f69d81"/>
<path d="M672.4,141.9 677.2,143.2 679.8,136.9 671.9,132.7 669.8,134.3Z" fill="#f7a287"/>
<path d="M628.2,199.4 628.5,199.3 631.3,196.5 630.2,188.2 626.1,187.2 623.1,194.4Z" fill="#fce0d6"/>
<path d="M647.4,130.4 649.9,134.9 656.0,134.9 656.0,129.5 650.6,127.1Z" fill="#f9bca7"/>
<path d="M675.1,161.8 668.7,167.2 668.7,167.4 678.8,172.2 679.6,172.0 679.6,168.7 680.4,168.1Z" fill="#f9bba6"/>
<path d="M668.7,167.2 665.8,159.7 659.3,160.9 659.9,169.4 666.7,169.3 668.7,167.4Z" fill="#f8ab92"/>
<path d="M678.8,172.2 672.1,177.0 674.2,182.1 678.6,183.1 681.3,180.8 680.6,172.6 679.6,173.0 679.6,172.0Z" fill="#ffe7de"/>
<path d="M685.5,153.2 686.0,146.7 677.3,143.4 674.9,151.7 677.3,155.2 682.3,154.9Z" fill="#fac5b3"/>
<path d="M683.4,200.8 683.8,204.8 685.0,206.7 690.0,204.2 691.5,202.9 691.5,201.7 692.7,197.5 692.2,197.3Z" fill="#f9bda8"/>
<path d="M632.8,169.3 629.8,177.0 635.1,179.3 639.0,176.7 640.3,172.9 636.9,168.1 636.5,167.9Z" fill="#fabfac"/>
<path d="M648.5,190.5 652.1,200.5 652.3,200.5 659.0,190.6 658.5,189.9 654.7,188.2Z" fill="#f88d6d"/>
<path d="M628.2,209.5 625.5,203.3 615.8,204.4 615.0,206.7 612.6,206.5 613.1,206.9 623.9,213.3 626.3,213.3Z" fill="#fcd6c8"/>
<path d="M604.8,141.2 600.0,140.0 594.4,142.8 595.7,145.3 603.7,144.9Z" fill="#fdefea"/>
<path d="M674.9,151.7 677.3,143.4 677.2,143.2 672.4,141.9 665.5,148.2 665.5,148.3Z" fill="#f9987a"/>
<path d="M644.7,162.4 646.6,162.7 649.9,154.0 639.0,151.6 638.0,155.2Z" fill="#f9b9a3"/>
<path d="M624.9,185.7 627.0,177.6 618.7,176.5 620.0,181.7 618.8,185.2Z" fill="#fde4da"/>
</g>
<path d="M654.3,114.5 658.9,120.3 663.6,124.9 669.1,122.9 669.1,127.5 673.7,130.1 677.1,130.8 681.8,131.8 683.0,127.5 680.1,122.9 682.2,120.3 678.8,114.9 676.3,114.3 677.5,109.6 670.4,105.5 664.0,106.6 656.6,106.6 653.3,106.5 651.7,107.5 648.9,108.9 649.6,110.4Z" fill="#fbd5c8"/>
<g stroke="#fbe0d6" stroke-width="0.35">
<path d="M671.1,117.5 668.5,118.9 668.4,120.6 672.0,120.7 672.3,119.5Z" fill="#fac1ae"/>
<path d="M676.7,112.7 677.5,109.6 676.6,109.0 675.0,111.5 675.0,112.1Z" fill="#fbc8b7"/>
<path d="M680.5,117.7 678.8,114.9 677.8,114.7 677.1,115.8 678.3,117.7Z" fill="#fac4b2"/>
<path d="M670.8,126.3 672.8,123.2 669.1,123.3 669.1,126.3Z" fill="#fac1ad"/>
<path d="M661.1,110.4 663.5,110.0 663.9,109.5 663.7,106.6 660.7,106.6Z" fill="#fac0ac"/>
<path d="M679.2,122.1 680.5,122.4 682.2,120.3 680.5,117.7 678.3,117.7 677.4,120.4Z" fill="#fbcbbb"/>
<path d="M655.1,112.8 655.8,109.2 655.7,109.1 649.0,109.1 649.6,110.4 652.9,113.3Z" fill="#fac2af"/>
<path d="M670.0,107.3 667.2,108.9 667.9,111.1 670.6,111.6 671.5,110.0Z" fill="#fac5b3"/>
<path d="M664.1,119.2 664.0,119.7 665.2,121.1 667.7,121.4 668.4,120.6 668.5,118.9 667.2,117.0 666.8,117.0Z" fill="#fac2af"/>
<path d="M664.5,114.8 663.2,116.5 664.1,119.2 666.8,117.0Z" fill="#fac5b3"/>
<path d="M676.4,120.3 673.2,122.9 673.2,123.0 675.2,125.2 679.2,122.1 677.4,120.4Z" fill="#fbcebf"/>
<path d="M672.4,128.0 670.8,126.3 669.1,126.3 669.1,127.5 672.1,129.2Z" fill="#fac0ac"/>
<path d="M655.1,112.8 657.1,113.9 660.0,111.4 657.2,109.2 655.8,109.2Z" fill="#fac5b3"/>
<path d="M660.2,111.3 661.4,113.2 664.5,114.0 665.4,112.9 663.5,110.0 661.1,110.4Z" fill="#fbd2c4"/>
<path d="M660.6,116.3 663.2,116.5 664.5,114.8 664.5,114.0 661.4,113.2Z" fill="#fac4b2"/>
<path d="M660.6,116.3 659.7,116.9 659.2,120.4 664.0,119.7 664.1,119.2 663.2,116.5Z" fill="#fbccbc"/>
<path d="M665.2,121.1 664.0,119.7 659.2,120.4 659.1,120.5 663.5,124.8Z" fill="#fbcaba"/>
<path d="M670.9,112.5 670.6,111.6 667.9,111.1 666.5,112.7 668.5,115.3 669.1,115.2Z" fill="#fac0ad"/>
<path d="M669.1,115.2 668.5,115.3 667.2,117.0 668.5,118.9 671.1,117.5 671.2,116.8Z" fill="#fabeaa"/>
<path d="M670.0,107.3 671.5,110.0 672.8,109.6 674.1,107.6 670.5,105.6Z" fill="#fbc9b8"/>
<path d="M679.2,122.1 675.2,125.2 675.5,126.6 676.6,127.6 677.5,127.6 680.7,123.9 680.1,122.9 680.5,122.4Z" fill="#fac3b0"/>
<path d="M673.2,123.0 672.8,123.2 670.8,126.3 672.4,128.0 675.5,126.6 675.2,125.2Z" fill="#fbd0c1"/>
<path d="M677.5,127.6 682.3,130.0 683.0,127.5 680.7,123.9Z" fill="#fbd1c3"/>
<path d="M672.0,120.7 668.4,120.6 667.7,121.4 668.3,123.2 669.1,122.9 669.1,123.3 672.8,123.2 673.2,123.0 673.2,122.9Z" fill="#fac1ad"/>
<path d="M676.0,130.6 677.1,130.8 681.8,131.8 682.3,130.0 677.5,127.6 676.6,127.6Z" fill="#fbccbd"/>
<path d="M657.3,114.7 657.1,113.9 655.1,112.8 652.9,113.3 654.3,114.5 655.8,116.4Z" fill="#fabfab"/>
<path d="M671.2,116.8 671.1,117.5 672.3,119.5 674.7,118.2 674.9,116.3 673.5,115.2Z" fill="#fbd2c3"/>
<path d="M676.6,109.0 674.1,107.6 672.8,109.6 675.0,111.5Z" fill="#fac1ae"/>
<path d="M674.7,118.2 672.3,119.5 672.0,120.7 673.2,122.9 676.4,120.3Z" fill="#fbd2c4"/>
<path d="M667.7,121.4 665.2,121.1 663.5,124.8 663.6,124.9 668.3,123.2Z" fill="#fbcaba"/>
<path d="M665.4,112.9 666.5,112.7 667.9,111.1 667.2,108.9 667.2,108.9 663.9,109.5 663.5,110.0Z" fill="#fbd0c1"/>
<path d="M660.7,106.6 658.9,106.6 657.2,109.2 660.0,111.4 660.2,111.3 661.1,110.4Z" fill="#fac5b2"/>
<path d="M667.2,108.9 670.0,107.3 670.5,105.6 670.4,105.5 666.0,106.3 667.2,108.9Z" fill="#fbd0c1"/>
<path d="M675.0,112.1 673.2,113.9 673.5,115.2 674.9,116.3 677.1,115.8 677.8,114.7 676.3,114.3 676.7,112.7Z" fill="#fbd0c1"/>
<path d="M670.9,112.5 669.1,115.2 671.2,116.8 673.5,115.2 673.2,113.9Z" fill="#fbc9b8"/>
<path d="M655.7,109.1 655.4,106.6 653.3,106.5 651.7,107.5 648.9,108.9 649.0,109.1Z" fill="#fac3b1"/>
<path d="M659.2,120.4 659.7,116.9 657.3,114.7 655.8,116.4 658.9,120.3 659.1,120.5Z" fill="#fbcbbb"/>
<path d="M675.0,112.1 675.0,111.5 672.8,109.6 671.5,110.0 670.6,111.6 670.9,112.5 673.2,113.9Z" fill="#fac6b4"/>
<path d="M663.9,109.5 667.2,108.9 666.0,106.3 664.0,106.6 663.7,106.6Z" fill="#fbcbbb"/>
<path d="M664.5,114.8 666.8,117.0 667.2,117.0 668.5,115.3 666.5,112.7 665.4,112.9 664.5,114.0Z" fill="#fac0ac"/>
<path d="M660.0,111.4 657.1,113.9 657.3,114.7 659.7,116.9 660.6,116.3 661.4,113.2 660.2,111.3Z" fill="#fbcfc0"/>
<path d="M657.2,109.2 658.9,106.6 656.6,106.6 655.4,106.6 655.7,109.1 655.8,109.2Z" fill="#fbd3c4"/>
<path d="M678.3,117.7 677.1,115.8 674.9,116.3 674.7,118.2 676.4,120.3 677.4,120.4Z" fill="#fbc7b5"/>
<path d="M676.6,127.6 675.5,126.6 672.4,128.0 672.1,129.2 673.7,130.1 676.0,130.6Z" fill="#fac4b2"/>
</g>
<path d="M664.0,106.6 670.4,105.5 677.5,109.6 676.3,114.3 678.8,114.9 678.8,111.6 680.5,106.2 678.8,100.1 684.7,99.4 687.7,94.6 684.7,90.4 687.7,89.0 688.9,80.6 688.9,75.7 688.6,75.5 687.5,75.8 681.7,77.5 674.2,79.2 670.0,82.5 667.5,87.5 666.7,93.3 662.5,99.2 658.3,103.3 655.2,105.3 656.6,106.6Z" fill="#f9b9a3"/>
<g stroke="#fbe0d6" stroke-width="0.35">
<path d="M686.1,81.4 688.9,80.3 688.9,75.7 688.6,75.5 687.5,75.8 682.8,77.2 684.7,81.1Z" fill="#fde6de"/>
<path d="M671.0,100.5 674.1,102.6 674.9,102.5 675.4,102.1 675.4,99.7 673.6,98.7Z" fill="#fdece6"/>
<path d="M686.1,81.4 685.8,85.3 688.2,85.7 688.9,80.6 688.9,80.3Z" fill="#fbcbbb"/>
<path d="M670.7,89.5 670.8,89.5 673.1,87.8 671.3,84.9 668.6,85.3 667.7,87.1Z" fill="#fcddd2"/>
<path d="M675.5,88.9 675.0,88.3 673.8,87.8 673.1,87.8 670.8,89.5 672.4,92.7 672.7,92.9 674.1,92.4Z" fill="#fac3b0"/>
<path d="M658.8,106.6 662.8,106.6 660.3,102.9 659.2,102.5 659.0,102.6Z" fill="#fde5dd"/>
<path d="M667.7,94.5 667.0,98.8 670.0,99.4 670.7,96.6Z" fill="#fbccbc"/>
<path d="M679.5,94.9 679.7,92.0 677.7,91.2 676.4,93.3 676.7,94.3Z" fill="#fdede7"/>
<path d="M675.7,95.8 676.7,94.3 676.4,93.3 674.1,92.4 672.7,92.9 673.0,96.0 673.1,96.1Z" fill="#fbcdbd"/>
<path d="M679.3,109.9 679.7,108.8 677.8,106.0 675.9,106.5 674.5,107.9 677.5,109.6 677.4,110.0Z" fill="#fde8e1"/>
<path d="M678.8,113.0 678.8,111.6 679.3,109.9 677.4,110.0 676.5,113.4Z" fill="#fbc9b9"/>
<path d="M682.8,85.5 681.8,83.9 678.9,85.5 679.9,88.0 681.2,88.4Z" fill="#fbd2c4"/>
<path d="M659.0,102.6 658.3,103.3 655.2,105.3 656.6,106.6 658.8,106.6Z" fill="#fce3da"/>
<path d="M680.2,81.3 678.8,78.1 677.7,78.4 675.6,81.7 675.7,83.0 677.4,83.9Z" fill="#fbcaba"/>
<path d="M682.3,91.3 682.8,93.3 684.9,94.6 686.7,93.2 685.2,91.1Z" fill="#fdece7"/>
<path d="M667.2,102.4 666.0,105.2 666.2,106.2 666.2,106.2 670.6,103.8 670.2,101.5Z" fill="#fde7df"/>
<path d="M670.7,89.5 667.7,87.1 667.5,87.5 666.7,93.3Z" fill="#fac2af"/>
<path d="M677.1,98.3 678.2,98.3 680.3,96.2 680.1,95.6 679.5,94.9 676.7,94.3 675.7,95.8Z" fill="#fcd9cd"/>
<path d="M667.2,102.4 666.3,99.4 663.9,100.6 663.7,102.4 666.0,105.2Z" fill="#fbccbc"/>
<path d="M675.4,102.1 674.9,102.5 675.9,106.5 677.8,106.0 678.1,105.6 677.5,102.5Z" fill="#fce0d6"/>
<path d="M663.9,100.6 666.3,99.4 666.3,99.3 663.9,97.2 662.5,99.2 662.3,99.4Z" fill="#fdede7"/>
<path d="M666.3,99.3 667.0,98.8 667.7,94.5 667.7,94.5 666.6,93.4 663.9,97.2Z" fill="#fcdfd5"/>
<path d="M685.8,85.3 685.4,85.8 685.6,88.1 686.8,89.5 687.7,89.0 688.2,85.7Z" fill="#fcdfd4"/>
<path d="M679.7,92.0 681.9,90.8 681.7,89.1 681.2,88.4 679.9,88.0 677.2,89.6 677.7,91.2Z" fill="#fdede8"/>
<path d="M675.7,83.0 675.0,83.4 673.8,87.8 675.0,88.3 677.9,85.0 677.4,83.9Z" fill="#fde4db"/>
<path d="M682.0,82.3 684.7,81.1 682.8,77.2 681.7,77.5 678.8,78.1 680.2,81.3Z" fill="#fdebe4"/>
<path d="M682.4,99.7 684.7,99.4 685.8,97.6 684.7,96.0 681.8,97.1Z" fill="#fdece6"/>
<path d="M685.4,85.8 685.8,85.3 686.1,81.4 684.7,81.1 682.0,82.3 681.8,83.9 682.8,85.5Z" fill="#fcdcd0"/>
<path d="M679.9,88.0 678.9,85.5 677.9,85.0 675.0,88.3 675.5,88.9 677.2,89.6Z" fill="#fdebe5"/>
<path d="M663.9,100.6 662.3,99.4 659.2,102.5 660.3,102.9 663.7,102.4Z" fill="#fcdace"/>
<path d="M671.1,81.6 670.0,82.5 668.6,85.3 671.3,84.9 672.0,83.4Z" fill="#fdece6"/>
<path d="M677.7,91.2 677.2,89.6 675.5,88.9 674.1,92.4 676.4,93.3Z" fill="#fce3da"/>
<path d="M682.0,82.3 680.2,81.3 677.4,83.9 677.9,85.0 678.9,85.5 681.8,83.9Z" fill="#fac3b0"/>
<path d="M680.3,96.2 681.8,97.1 684.7,96.0 684.9,94.6 682.8,93.3 680.1,95.6Z" fill="#fbcbba"/>
<path d="M663.7,102.4 660.3,102.9 662.8,106.6 664.0,106.6 666.2,106.2 666.0,105.2Z" fill="#fbd1c2"/>
<path d="M672.0,83.4 675.0,83.4 675.7,83.0 675.6,81.7 673.1,80.0 671.1,81.6Z" fill="#fbccbc"/>
<path d="M667.7,94.5 672.4,92.7 670.8,89.5 670.7,89.5 666.7,93.3 666.7,93.3 666.6,93.4Z" fill="#fbcebe"/>
<path d="M666.2,106.2 670.4,105.5 672.5,106.7 672.3,104.8 670.6,103.8Z" fill="#fde9e2"/>
<path d="M678.1,105.6 680.1,105.0 679.2,101.6 677.5,102.5Z" fill="#fbd3c4"/>
<path d="M675.6,81.7 677.7,78.4 674.2,79.2 673.1,80.0Z" fill="#fde7df"/>
<path d="M675.0,83.4 672.0,83.4 671.3,84.9 673.1,87.8 673.8,87.8Z" fill="#fce2d8"/>
<path d="M670.0,99.4 667.0,98.8 666.3,99.3 666.3,99.4 667.2,102.4 670.2,101.5 670.8,100.5Z" fill="#fcdfd5"/>
<path d="M684.9,94.6 684.7,96.0 685.8,97.6 687.7,94.6 686.7,93.2Z" fill="#fdeae4"/>
<path d="M681.8,97.1 680.3,96.2 678.2,98.3 679.1,100.1 682.4,99.7Z" fill="#fbd1c3"/>
<path d="M675.4,102.1 677.5,102.5 679.2,101.6 678.8,100.1 679.1,100.1 678.2,98.3 677.1,98.3 675.4,99.7Z" fill="#fbd0c2"/>
<path d="M673.6,98.7 675.4,99.7 677.1,98.3 675.7,95.8 673.1,96.1Z" fill="#fde8e1"/>
<path d="M676.5,113.4 676.3,114.3 678.8,114.9 678.8,113.0Z" fill="#fdebe5"/>
<path d="M670.8,100.5 670.2,101.5 670.6,103.8 672.3,104.8 674.1,102.6 671.0,100.5Z" fill="#fdebe5"/>
<path d="M678.1,105.6 677.8,106.0 679.7,108.8 680.5,106.2 680.1,105.0Z" fill="#fcd6c9"/>
<path d="M679.5,94.9 680.1,95.6 682.8,93.3 682.3,91.3 681.9,90.8 679.7,92.0Z" fill="#fdebe5"/>
<path d="M672.4,92.7 667.7,94.5 667.7,94.5 670.7,96.6 673.0,96.0 672.7,92.9Z" fill="#fbcdbe"/>
<path d="M681.7,89.1 685.6,88.1 685.4,85.8 682.8,85.5 681.2,88.4Z" fill="#fcd8ca"/>
<path d="M685.6,88.1 681.7,89.1 681.9,90.8 682.3,91.3 685.2,91.1 684.7,90.4 686.8,89.5Z" fill="#fac3b0"/>
<path d="M675.9,106.5 674.9,102.5 674.1,102.6 672.3,104.8 672.5,106.7 674.5,107.9Z" fill="#fac4b2"/>
<path d="M673.0,96.0 670.7,96.6 670.0,99.4 670.8,100.5 671.0,100.5 673.6,98.7 673.1,96.1Z" fill="#fcddd1"/>
</g>
<path d="M687.7,89.0 684.7,90.4 687.7,94.6 684.7,99.4 678.8,100.1 680.5,106.2 678.8,111.6 678.8,114.9 682.2,120.3 680.1,122.9 683.0,127.5 681.8,131.8 685.1,135.7 690.6,135.7 697.4,138.3 694.0,144.3 692.3,155.7 700.8,153.8 708.8,156.9 714.3,159.4 720.2,156.9 731.2,155.7 738.0,156.9 738.0,152.5 736.3,148.1 741.8,143.7 745.0,140.8 734.6,132.7 730.3,120.9 737.5,119.6 748.9,111.6 753.2,113.6 754.9,111.6 751.5,100.8 752.7,96.7 751.0,91.8 747.7,86.3 749.8,79.9 748.1,71.4 748.1,71.1 747.5,70.7 743.3,64.8 741.1,61.1 740.3,61.0 738.3,62.3 734.2,64.0 730.0,64.8 725.8,68.2 720.0,69.8 717.5,64.8 718.3,60.7 713.3,59.0 713.0,58.6 711.8,58.3 701.2,56.9 699.1,57.8 700.0,62.0 701.5,66.0 702.5,70.0 698.3,71.7 693.3,74.2 689.0,75.4 688.9,75.7 688.9,80.6Z" fill="#fdf0ec"/>
<g stroke="#f6e2db" stroke-width="0.35">
<path d="M734.0,73.8 731.8,72.0 729.7,73.5 729.9,75.4 731.5,76.6 733.3,76.3 733.9,75.5Z" fill="#fabaa4"/>
<path d="M745.7,101.9 744.7,101.6 742.5,102.6 742.2,103.1 743.3,105.7 745.3,106.0 746.4,102.6Z" fill="#fdede8"/>
<path d="M701.3,79.4 701.6,79.7 705.6,79.4 705.7,79.1 705.4,77.1 702.5,75.7 701.1,76.5Z" fill="#fdede7"/>
<path d="M710.1,138.9 710.6,135.8 709.1,134.7 706.7,136.6 706.9,138.7Z" fill="#fdebe5"/>
<path d="M704.0,91.0 705.2,94.1 708.3,93.5 708.2,92.0 705.4,89.1Z" fill="#fde9e2"/>
<path d="M727.8,145.5 728.2,144.2 727.0,141.9 723.5,141.7 723.4,141.8 723.8,143.1 726.9,145.8Z" fill="#fef4f1"/>
<path d="M704.5,83.0 701.6,81.9 700.6,82.9 700.8,85.6 704.5,85.2 705.0,84.2Z" fill="#fde7df"/>
<path d="M684.5,107.1 684.2,104.0 682.1,103.5 680.0,104.5 680.5,106.2 679.7,108.6Z" fill="#fef5f2"/>
<path d="M708.2,112.8 706.6,110.2 703.3,112.6 703.2,112.9 705.8,114.7 708.0,113.4Z" fill="#fef1ed"/>
<path d="M690.0,94.7 692.8,97.0 694.4,96.9 693.3,93.1 690.9,92.5Z" fill="#fef5f3"/>
<path d="M732.6,96.4 733.3,97.4 733.7,97.4 736.9,95.2 736.5,93.0 733.5,93.2 732.7,93.9Z" fill="#fef3f0"/>
<path d="M690.0,122.8 689.4,123.4 689.9,128.4 690.7,129.2 692.7,128.0 693.3,123.4Z" fill="#fce1d7"/>
<path d="M693.8,133.2 691.7,131.6 689.3,135.7 690.6,135.7 693.5,136.8Z" fill="#fb9a7c"/>
<path d="M730.2,147.0 727.8,145.5 726.9,145.8 725.9,147.4 728.0,149.7 728.9,149.7Z" fill="#fef3f0"/>
<path d="M736.7,142.3 734.8,143.1 734.5,144.0 736.3,147.6 736.8,147.6 739.7,145.3Z" fill="#fef1ed"/>
<path d="M695.7,151.1 695.8,151.1 699.4,149.3 699.6,148.4 698.4,146.5 695.4,147.7Z" fill="#fdf0ec"/>
<path d="M705.0,84.2 704.5,85.2 705.3,87.8 705.3,87.9 709.5,87.1 709.5,87.0 709.4,85.7 707.9,83.9Z" fill="#fef4f1"/>
<path d="M716.0,108.8 717.0,105.2 715.5,104.4 714.2,104.5 712.7,106.9 714.3,109.6Z" fill="#fef1ed"/>
<path d="M686.9,111.5 684.3,114.5 685.7,115.9 689.1,114.9 688.7,111.6Z" fill="#fcded3"/>
<path d="M715.3,96.2 714.2,97.1 713.6,98.8 713.8,99.4 716.0,100.6 718.3,100.0 718.0,96.6Z" fill="#fef2ef"/>
<path d="M712.9,151.6 717.0,153.7 717.5,153.5 716.6,149.6 716.2,149.4 713.2,150.4Z" fill="#fef1ed"/>
<path d="M749.2,98.1 747.9,97.8 745.7,101.9 746.4,102.6 748.8,103.0 750.6,99.6Z" fill="#fce2d8"/>
<path d="M699.8,105.0 702.1,102.7 699.5,100.4 697.5,101.0 697.1,102.8Z" fill="#fef2ee"/>
<path d="M698.2,89.5 695.2,90.5 695.0,91.9 697.4,93.8 699.2,93.4Z" fill="#fef4f1"/>
<path d="M684.5,107.1 679.7,108.6 679.4,109.5 682.0,111.3 685.3,109.5 685.3,107.9Z" fill="#f69e82"/>
<path d="M716.8,77.1 715.3,77.1 713.1,79.1 713.4,79.6 716.9,81.5 717.1,81.3 717.7,78.5Z" fill="#fcded2"/>
<path d="M747.9,97.8 749.2,98.1 751.9,94.3 751.8,93.9 748.9,93.5 746.6,96.5Z" fill="#fde8e0"/>
<path d="M682.1,103.5 684.2,104.0 684.3,103.9 684.9,99.9 684.5,99.4 681.6,99.8Z" fill="#f9bca7"/>
<path d="M715.2,86.6 715.2,86.7 716.4,91.7 717.5,91.9 720.0,89.8 716.5,85.6 716.0,85.5Z" fill="#fde6df"/>
<path d="M684.3,103.9 684.2,104.0 684.5,107.1 685.3,107.9 688.6,107.1 687.7,103.5Z" fill="#fef6f4"/>
<path d="M711.7,152.9 712.4,155.4 715.6,156.2 717.0,153.7 712.9,151.6Z" fill="#fabfab"/>
<path d="M736.8,72.3 739.2,73.6 740.8,71.1 740.4,69.6 738.1,68.6 736.0,69.6Z" fill="#fef3f0"/>
<path d="M740.3,65.5 741.8,62.3 741.1,61.1 740.3,61.0 738.3,62.3 735.9,63.3 736.3,64.7 738.6,65.9Z" fill="#fdeeea"/>
<path d="M733.2,108.1 734.7,106.2 732.8,103.0 730.2,105.0 730.1,105.4Z" fill="#fef5f2"/>
<path d="M699.6,106.4 699.6,106.4 696.4,107.3 695.9,110.2 697.8,112.2 697.8,112.2 699.8,110.2Z" fill="#fef4f1"/>
<path d="M723.5,141.7 727.0,141.9 729.3,139.4 729.2,138.9 727.2,138.0 723.9,139.9Z" fill="#fef1ed"/>
<path d="M727.2,138.0 729.2,138.9 730.7,137.1 728.2,134.0 725.6,134.8Z" fill="#fef5f3"/>
<path d="M729.2,68.9 726.8,70.4 727.5,72.6 729.7,73.5 731.8,72.0 731.9,70.2 731.1,69.1Z" fill="#fef1ed"/>
<path d="M709.2,94.2 708.3,93.5 705.2,94.1 704.1,95.0 703.9,96.4 707.7,99.3 708.1,99.3 709.1,98.0Z" fill="#fef3f0"/>
<path d="M744.9,88.0 744.1,89.7 744.6,92.0 747.8,91.5 749.2,88.7 749.0,88.4Z" fill="#fef5f3"/>
<path d="M726.7,122.1 728.1,126.5 729.5,126.4 731.5,124.1 730.9,122.4Z" fill="#fef1ed"/>
<path d="M714.1,129.4 711.5,130.1 711.5,131.1 713.9,133.6 715.2,133.4 716.3,131.3Z" fill="#fef4f1"/>
<path d="M713.9,141.9 713.4,141.7 710.8,144.1 713.5,146.1 714.0,145.9 715.2,143.8Z" fill="#fef3ef"/>
<path d="M741.7,85.4 740.2,88.1 740.9,89.2 744.1,89.7 744.9,88.0 744.1,86.0 741.8,85.3Z" fill="#fef2ef"/>
<path d="M716.1,62.0 713.8,63.0 713.9,65.2 715.7,65.8 717.8,63.5 717.9,63.0Z" fill="#fdf0ec"/>
<path d="M707.5,146.5 709.1,145.6 709.8,144.1 708.8,142.6 705.6,141.9 704.9,142.7 705.6,146.1Z" fill="#fef4f2"/>
<path d="M693.0,102.5 691.7,103.7 691.6,105.9 692.7,106.9 695.4,106.5 695.1,103.8Z" fill="#fef4f2"/>
<path d="M704.0,136.0 700.9,135.2 699.7,139.4 703.7,138.9Z" fill="#fef6f4"/>
<path d="M694.4,96.9 692.8,97.0 689.7,99.3 693.0,101.7 695.2,98.8 695.1,97.5 695.0,97.3Z" fill="#fdeae4"/>
<path d="M733.8,117.8 735.1,116.7 735.0,115.3 733.4,113.4 731.4,113.6 730.7,116.5Z" fill="#fcded3"/>
<path d="M740.0,80.2 736.5,79.3 735.9,79.6 735.5,82.6 737.7,83.7Z" fill="#f6cbbb"/>
<path d="M739.4,74.0 743.6,74.6 744.1,74.4 745.0,72.4 744.6,71.2 740.8,71.1 739.2,73.6Z" fill="#febea8"/>
<path d="M716.4,114.6 716.9,112.9 714.0,110.3 712.0,111.8 712.9,114.9Z" fill="#fef1ed"/>
<path d="M724.1,86.0 723.1,82.5 721.8,82.3 719.4,85.2 723.2,87.8 723.4,87.8Z" fill="#fef2ef"/>
<path d="M709.2,152.6 711.7,152.9 712.9,151.6 713.2,150.4 712.1,148.5 711.2,148.3 708.1,150.0 707.6,150.8Z" fill="#fef1ed"/>
<path d="M702.5,131.9 700.7,133.6 700.5,134.4 700.9,135.2 704.0,136.0 704.5,135.7 705.0,133.6Z" fill="#fef4f1"/>
<path d="M724.7,80.2 722.4,77.4 721.6,77.3 720.7,78.3 720.8,81.4 721.8,82.3 723.1,82.5 724.2,81.6Z" fill="#fbbba5"/>
<path d="M684.9,99.9 684.3,103.9 687.7,103.5 688.1,103.0 688.3,100.5Z" fill="#fce3da"/>
<path d="M736.8,72.3 734.0,73.8 733.9,75.5 737.0,76.5 739.1,75.0 739.4,74.0 739.2,73.6Z" fill="#ffd5c5"/>
<path d="M726.9,127.3 726.6,129.7 729.6,131.9 729.7,131.8 731.1,128.4 729.5,126.4 728.1,126.5Z" fill="#fef3f0"/>
<path d="M720.3,101.2 720.2,103.5 721.7,104.4 725.7,103.4 726.4,102.1 725.7,101.3 722.2,99.9Z" fill="#f4b49e"/>
<path d="M732.6,96.4 732.7,93.9 730.5,92.9 728.1,94.1 728.8,96.2Z" fill="#fef4f1"/>
<path d="M717.9,116.7 720.0,116.4 720.3,111.9 719.8,111.4 716.9,112.9 716.4,114.6Z" fill="#fdede7"/>
<path d="M709.9,116.6 709.3,118.0 713.2,119.9 714.3,118.7 712.9,115.0Z" fill="#fef2ef"/>
<path d="M699.2,93.4 697.4,93.8 695.0,97.3 695.1,97.5 699.7,97.5 699.7,93.6Z" fill="#fef4f1"/>
<path d="M728.4,97.2 726.4,97.9 725.7,101.3 726.4,102.1 727.3,102.1 730.0,100.3Z" fill="#fef2ee"/>
<path d="M681.3,124.8 683.0,127.5 682.8,128.3 684.9,127.9 685.7,127.0 685.4,125.9 682.7,124.2Z" fill="#fef2ef"/>
<path d="M715.2,86.7 712.4,90.1 713.1,92.3 714.9,92.6 716.4,91.7Z" fill="#fef2ee"/>
<path d="M719.6,95.1 718.0,96.6 718.3,100.0 720.3,101.2 722.2,99.9 722.4,98.0 720.2,95.1Z" fill="#f5b59f"/>
<path d="M691.7,131.6 690.6,129.5 686.6,132.2 687.2,135.7 689.3,135.7Z" fill="#fef6f4"/>
<path d="M706.2,126.8 705.0,129.7 707.2,131.8 709.8,128.4 709.6,127.3 707.7,126.6Z" fill="#fdf0ec"/>
<path d="M705.5,105.5 704.8,107.4 706.6,109.8 709.6,108.5 710.0,106.9Z" fill="#fde4db"/>
<path d="M688.6,107.1 685.3,107.9 685.3,109.5 686.9,111.5 688.7,111.6 688.9,111.4 689.6,109.6 688.7,107.1Z" fill="#fef5f3"/>
<path d="M730.2,105.0 727.3,102.1 726.4,102.1 725.7,103.4 726.0,106.6 729.0,106.6 730.1,105.4Z" fill="#fef1ed"/>
<path d="M722.2,93.4 720.9,89.8 720.0,89.8 717.5,91.9 719.6,95.1 720.2,95.1Z" fill="#fdede7"/>
<path d="M737.0,91.4 738.4,88.2 736.8,86.9 736.1,87.0 734.3,89.1Z" fill="#fef1ed"/>
<path d="M706.0,69.2 706.1,69.9 706.4,70.2 710.6,70.4 711.7,68.7 711.3,66.8 711.2,66.8 706.7,68.0Z" fill="#fde8e1"/>
<path d="M724.1,86.0 723.4,87.8 724.4,88.6 728.0,88.2 728.9,85.1 728.4,84.6Z" fill="#fdebe5"/>
<path d="M700.9,117.1 700.2,115.1 699.8,114.9 696.0,116.8 697.0,119.7 699.0,120.0Z" fill="#fef1ee"/>
<path d="M710.8,126.3 714.6,126.9 715.8,126.2 715.6,123.6 712.9,122.2 711.8,122.9Z" fill="#fef5f2"/>
<path d="M712.0,111.8 711.8,111.7 708.2,112.8 708.0,113.4 709.9,116.6 712.9,115.0 712.9,114.9Z" fill="#fef2ee"/>
<path d="M740.3,65.5 741.7,67.6 743.6,67.5 744.5,66.5 743.3,64.8 741.8,62.3Z" fill="#fcdfd5"/>
<path d="M697.3,76.9 699.7,76.0 698.6,71.6 698.3,71.7 694.6,73.6Z" fill="#fef5f2"/>
<path d="M704.5,154.2 706.5,150.9 704.3,149.5 701.7,151.8Z" fill="#fef2ef"/>
<path d="M700.8,85.6 700.6,82.9 697.8,82.3 696.6,83.9 698.1,86.7 699.2,87.5 699.4,87.5Z" fill="#fef4f2"/>
<path d="M718.1,70.0 715.6,69.5 714.8,70.0 714.9,72.7 718.5,74.0 719.1,73.7Z" fill="#fef6f4"/>
<path d="M744.7,101.6 743.7,98.5 740.2,99.6 742.5,102.6Z" fill="#fdf0ec"/>
<path d="M702.3,60.7 703.2,57.1 701.2,56.9 699.1,57.8 699.5,59.8Z" fill="#fbd2c4"/>
<path d="M704.0,62.0 702.8,61.6 700.6,63.7 701.5,66.0 701.8,67.2 702.0,67.2 704.5,64.6Z" fill="#fef3f0"/>
<path d="M743.3,105.7 742.2,103.1 738.4,104.7 738.2,105.7 738.6,106.6 741.3,107.6Z" fill="#fcdfd5"/>
<path d="M738.6,106.6 738.2,105.7 734.7,106.2 733.2,108.1 733.1,108.9 734.7,110.5 736.3,110.7 737.6,109.9Z" fill="#fdede8"/>
<path d="M697.6,130.5 697.7,129.5 695.4,127.9 692.7,128.0 690.7,129.2 690.6,129.5 691.7,131.6 693.8,133.2 695.7,132.8Z" fill="#fdf0ec"/>
<path d="M711.9,74.2 710.6,77.2 710.7,78.1 713.1,79.1 715.3,77.1 713.3,74.0Z" fill="#fef1ee"/>
<path d="M729.5,126.4 731.1,128.4 733.1,128.6 731.5,124.1Z" fill="#f6a084"/>
<path d="M730.9,141.3 733.2,141.2 734.2,139.0 732.4,136.5 730.7,137.1 729.2,138.9 729.3,139.4Z" fill="#fef3f0"/>
<path d="M709.6,108.5 706.6,109.8 706.6,110.2 708.2,112.8 711.8,111.7Z" fill="#fef2ef"/>
<path d="M704.5,85.2 700.8,85.6 699.4,87.5 701.2,88.6 705.3,87.8Z" fill="#fef1ee"/>
<path d="M705.7,80.0 705.6,79.4 701.6,79.7 701.6,81.9 704.5,83.0Z" fill="#fbd1c2"/>
<path d="M694.7,121.0 693.6,119.9 690.0,119.9 690.0,122.8 693.3,123.4 694.5,122.6Z" fill="#fef1ed"/>
<path d="M734.5,144.0 732.0,144.9 731.3,146.8 733.7,148.9 736.3,147.6Z" fill="#fef4f1"/>
<path d="M728.9,118.6 726.3,120.5 726.4,121.8 726.7,122.1 730.9,122.4 730.3,120.9 730.9,120.8Z" fill="#fef4f2"/>
<path d="M711.2,66.8 711.3,66.8 713.9,65.2 713.8,63.0 712.3,61.5 710.9,61.4 710.3,65.4Z" fill="#fbcab9"/>
<path d="M742.7,110.2 741.3,107.6 738.6,106.6 737.6,109.9 740.5,111.7Z" fill="#fdf0ec"/>
<path d="M733.4,113.4 734.7,110.5 733.1,108.9 730.2,110.2 729.9,112.0 731.4,113.6Z" fill="#fef2ee"/>
<path d="M728.1,94.1 730.5,92.9 730.4,90.0 729.1,89.7 726.0,92.9Z" fill="#fef4f2"/>
<path d="M731.3,132.5 733.8,130.5 733.1,128.6 731.1,128.4 729.7,131.8Z" fill="#fef2ef"/>
<path d="M717.3,127.1 717.5,130.7 720.6,131.5 721.7,130.7 721.6,127.6 720.3,126.2Z" fill="#fdf0ec"/>
<path d="M699.7,139.4 699.6,139.6 699.6,139.9 703.1,143.0 704.9,142.7 705.6,141.9 705.4,140.2 703.7,138.9Z" fill="#fde4dc"/>
<path d="M722.2,99.9 725.7,101.3 726.4,97.9 724.7,96.6 722.4,98.0Z" fill="#fef1ed"/>
<path d="M706.5,150.9 707.6,150.8 708.1,150.0 707.5,146.5 705.6,146.1 703.8,147.7 704.3,149.5Z" fill="#fef5f2"/>
<path d="M709.7,81.4 710.5,78.3 705.7,79.1 705.6,79.4 705.7,80.0 708.4,82.0Z" fill="#fbcdbd"/>
<path d="M736.9,95.2 733.7,97.4 737.5,100.2 739.0,99.1 739.2,96.9Z" fill="#fef1ed"/>
<path d="M737.2,153.2 738.0,152.9 738.0,152.5 736.3,148.1 736.8,147.6 736.3,147.6 733.7,148.9 733.2,150.4 733.9,152.6Z" fill="#f7a98f"/>
<path d="M714.0,145.9 716.2,147.5 718.4,145.8 716.9,143.8 715.2,143.8Z" fill="#f9b9a4"/>
<path d="M717.6,136.2 716.0,137.9 716.3,140.1 718.5,141.3 719.7,141.0 719.5,136.2Z" fill="#fef4f2"/>
<path d="M703.8,120.6 701.4,117.3 700.9,117.1 699.0,120.0 699.2,120.4 701.8,122.2Z" fill="#fef3f0"/>
<path d="M728.2,134.0 730.7,137.1 732.4,136.5 732.9,135.5 732.9,135.2 731.3,132.5 729.7,131.8 729.6,131.9Z" fill="#fef2ee"/>
<path d="M735.0,115.3 735.1,116.7 736.9,117.2 740.0,114.4 739.9,114.3 737.0,113.3Z" fill="#fdf0ec"/>
<path d="M748.8,74.9 748.5,73.2 745.0,72.4 744.1,74.4 746.9,76.7Z" fill="#f5b59f"/>
<path d="M692.4,88.9 690.9,86.6 688.0,86.7 688.0,86.8 690.2,91.1 690.3,91.1Z" fill="#fef3f0"/>
<path d="M715.2,86.6 709.5,87.0 709.5,87.1 709.9,89.1 712.4,90.1 715.2,86.7Z" fill="#fde9e2"/>
<path d="M744.1,110.1 743.3,110.3 744.1,115.0 748.1,112.2Z" fill="#fef4f1"/>
<path d="M749.0,103.2 748.9,107.5 749.6,108.2 752.8,105.2 752.5,103.9Z" fill="#fde4db"/>
<path d="M707.8,64.4 707.7,62.2 704.7,61.6 704.0,62.0 704.5,64.6 706.3,65.4Z" fill="#fce3da"/>
<path d="M705.6,121.8 707.7,122.1 708.6,121.6 709.0,118.2 706.3,117.6 704.8,120.7Z" fill="#fde7e0"/>
<path d="M702.8,102.5 702.1,102.7 699.8,105.0 699.6,106.4 699.6,106.4 703.4,108.0 704.8,107.4 705.5,105.5 705.4,104.7Z" fill="#fef4f1"/>
<path d="M700.6,93.4 704.1,95.0 705.2,94.1 704.0,91.0 702.0,90.8Z" fill="#fef6f4"/>
<path d="M694.3,114.6 697.8,112.2 695.9,110.2 693.7,110.6 692.6,112.6 692.8,113.5Z" fill="#fde4dc"/>
<path d="M690.9,86.6 692.4,88.9 693.7,88.8 694.5,87.4 693.9,85.4 692.0,85.0Z" fill="#fef2ee"/>
<path d="M715.2,133.4 717.6,136.2 719.5,136.2 719.9,136.0 720.6,131.5 717.5,130.7 716.3,131.3Z" fill="#fef5f3"/>
<path d="M704.7,155.3 707.3,156.3 709.2,152.6 707.6,150.8 706.5,150.9 704.5,154.2Z" fill="#fdeee9"/>
<path d="M750.7,110.1 754.8,111.5 753.8,108.3Z" fill="#fbcab9"/>
<path d="M749.6,108.2 750.4,110.1 750.7,110.1 753.8,108.3 752.8,105.2Z" fill="#fabea9"/>
<path d="M743.6,67.5 744.7,70.8 746.8,69.6 744.5,66.5Z" fill="#fabaa4"/>
<path d="M692.6,78.3 688.9,76.0 688.9,80.6 688.8,81.7 689.8,81.8Z" fill="#fef3f0"/>
<path d="M688.1,103.0 691.7,103.7 693.0,102.5 693.0,101.7 689.7,99.3 689.2,99.3 688.3,100.5Z" fill="#fef5f2"/>
<path d="M728.9,118.6 730.9,120.8 733.5,120.3 733.8,117.8 730.7,116.5 729.2,117.0Z" fill="#fef3f0"/>
<path d="M698.2,79.9 697.3,76.9 694.3,79.0 694.7,80.0 697.6,80.8Z" fill="#fef4f1"/>
<path d="M738.1,136.1 735.8,139.0 737.2,141.1 739.1,140.5 740.0,136.9 738.6,135.9Z" fill="#fef3f0"/>
<path d="M737.6,109.9 736.3,110.7 737.0,113.3 739.9,114.3 740.5,111.7Z" fill="#fbd2c4"/>
<path d="M698.0,143.7 699.6,139.9 699.6,139.6 697.2,138.6 694.5,143.5Z" fill="#fdf0ec"/>
<path d="M731.1,69.1 731.9,70.2 735.9,69.5 735.2,66.9 732.1,66.7Z" fill="#fce2d8"/>
<path d="M698.4,146.5 698.5,144.4 698.0,143.7 694.5,143.5 694.0,144.3 693.7,146.4 695.4,147.7Z" fill="#fef2ee"/>
<path d="M708.1,99.3 707.7,99.3 703.5,101.0 702.8,102.5 705.4,104.7 707.7,102.9 708.4,100.2Z" fill="#fcddd1"/>
<path d="M710.6,70.4 710.8,72.9 711.9,74.2 713.3,74.0 714.9,72.7 714.8,70.0 711.7,68.7Z" fill="#fdebe5"/>
<path d="M722.2,72.2 726.2,70.1 725.2,68.3 721.5,69.4Z" fill="#fcddd1"/>
<path d="M702.7,97.9 700.0,97.9 699.5,100.4 702.1,102.7 702.8,102.5 703.5,101.0Z" fill="#fef3f0"/>
<path d="M726.0,106.6 725.7,103.4 721.7,104.4 722.7,107.5 724.9,108.2 724.9,108.2Z" fill="#fdeeea"/>
<path d="M733.5,93.2 736.5,93.0 737.2,92.1 737.0,91.4 734.3,89.1 732.9,89.3Z" fill="#fef2ef"/>
<path d="M732.0,144.9 734.5,144.0 734.8,143.1 733.2,141.2 730.9,141.3 730.5,143.0Z" fill="#fef1ed"/>
<path d="M739.9,114.3 740.0,114.4 742.3,116.3 744.1,115.0 743.3,110.3 742.7,110.2 740.5,111.7Z" fill="#fef3f0"/>
<path d="M733.3,97.4 732.6,96.4 728.8,96.2 728.4,97.2 730.0,100.3 731.5,100.3Z" fill="#fef5f3"/>
<path d="M705.8,114.7 703.2,112.9 700.2,115.1 700.9,117.1 701.4,117.3 705.7,116.7Z" fill="#fde8e1"/>
<path d="M689.1,114.9 690.2,115.8 692.8,113.5 692.6,112.6 688.9,111.4 688.7,111.6Z" fill="#fef4f2"/>
<path d="M740.2,99.6 739.0,99.1 737.5,100.2 737.2,101.4 738.4,104.7 742.2,103.1 742.5,102.6Z" fill="#fce1d7"/>
<path d="M683.1,114.3 682.0,111.3 679.4,109.5 678.8,111.6 678.8,114.9 680.0,116.8Z" fill="#fef3f1"/>
<path d="M737.2,92.1 740.3,92.4 740.9,89.2 740.2,88.1 738.4,88.2 737.0,91.4Z" fill="#fef4f2"/>
<path d="M723.8,143.1 723.4,141.8 721.3,141.9 719.6,146.1 720.1,146.8 722.7,146.9Z" fill="#fdebe5"/>
<path d="M746.2,84.2 744.1,86.0 744.9,88.0 749.0,88.4 747.7,86.3 748.0,85.2Z" fill="#fef3f0"/>
<path d="M697.5,101.0 695.2,98.8 693.0,101.7 693.0,102.5 695.1,103.8 697.1,102.8Z" fill="#fef3f0"/>
<path d="M732.9,102.5 737.2,101.4 737.5,100.2 733.7,97.4 733.3,97.4 731.5,100.3Z" fill="#fef5f2"/>
<path d="M703.1,125.4 701.6,129.1 702.7,130.4 705.0,129.7 706.2,126.8 704.0,125.4Z" fill="#fef1ed"/>
<path d="M707.7,102.9 710.2,104.4 712.2,102.9 712.1,102.1 708.4,100.2Z" fill="#fef1ed"/>
<path d="M728.0,149.7 725.9,147.4 724.1,148.1 723.4,151.9 725.8,152.4Z" fill="#fef2ef"/>
<path d="M712.3,61.5 714.2,59.3 713.3,59.0 713.0,58.6 711.8,58.3 710.7,58.2 710.5,61.1 710.9,61.4Z" fill="#fcdfd4"/>
<path d="M717.0,105.2 716.0,108.8 719.5,110.2 720.2,108.8 718.3,105.1Z" fill="#fef5f3"/>
<path d="M726.0,106.6 724.9,108.2 726.1,109.5 729.7,109.8 729.0,106.6Z" fill="#fef3f0"/>
<path d="M712.9,115.0 714.3,118.7 716.6,118.5 717.9,116.7 716.4,114.6 712.9,114.9Z" fill="#fef3f0"/>
<path d="M705.6,121.8 704.8,120.7 703.8,120.6 701.8,122.2 701.8,124.5 703.1,125.4 704.0,125.4Z" fill="#fef3f0"/>
<path d="M719.7,141.0 721.3,141.9 723.4,141.8 723.5,141.7 723.9,139.9 722.6,136.7 719.9,136.0 719.5,136.2Z" fill="#fef6f4"/>
<path d="M720.4,156.8 722.8,153.5 723.0,152.2 721.0,151.7 718.0,153.5Z" fill="#fde7df"/>
<path d="M716.3,140.1 713.9,141.9 715.2,143.8 716.9,143.8 718.5,141.3Z" fill="#fdf0ec"/>
<path d="M702.3,110.4 703.4,108.0 699.6,106.4 699.8,110.2Z" fill="#fef4f1"/>
<path d="M704.7,61.6 707.7,62.2 708.9,61.2 706.6,57.6 706.6,57.6Z" fill="#fef5f3"/>
<path d="M737.0,76.5 736.5,79.3 740.0,80.2 740.8,80.0 741.1,79.0 739.1,75.0Z" fill="#f5b59f"/>
<path d="M701.8,122.2 699.2,120.4 697.9,124.2 699.5,125.1 701.8,124.5Z" fill="#fbcebf"/>
<path d="M733.3,153.3 730.5,153.9 730.1,155.8 731.2,155.7 733.5,156.1Z" fill="#fef1ed"/>
<path d="M723.8,143.1 722.7,146.9 724.1,148.1 725.9,147.4 726.9,145.8Z" fill="#fef3f0"/>
<path d="M742.2,81.7 741.8,85.3 744.1,86.0 746.2,84.2 746.1,81.8 745.9,81.6Z" fill="#fef4f1"/>
<path d="M716.0,100.6 715.5,104.4 717.0,105.2 718.3,105.1 720.2,103.5 720.3,101.2 718.3,100.0Z" fill="#f8b8a2"/>
<path d="M697.0,119.7 696.0,116.8 694.6,116.4 693.7,117.2 693.6,119.9 694.7,121.0Z" fill="#fcdcd0"/>
<path d="M701.7,144.7 703.1,143.0 699.6,139.9 698.0,143.7 698.5,144.4Z" fill="#fef6f4"/>
<path d="M723.4,151.9 723.0,152.2 722.8,153.5 724.3,156.5 727.1,156.1 726.8,153.3 725.8,152.4Z" fill="#fef2ef"/>
<path d="M746.8,77.6 745.8,78.5 745.9,81.6 746.1,81.8 749.3,81.4 749.8,79.9 749.6,79.1Z" fill="#fef4f1"/>
<path d="M742.2,81.7 745.9,81.6 745.8,78.5 743.0,78.0 741.1,79.0 740.8,80.0Z" fill="#f6cbbb"/>
<path d="M719.8,73.8 719.1,73.7 718.5,74.0 716.8,77.1 717.7,78.5 720.7,78.3 721.6,77.3Z" fill="#f7b7a1"/>
<path d="M688.0,86.8 687.7,89.0 684.7,90.4 685.6,91.7 690.2,91.1Z" fill="#fef3f0"/>
<path d="M748.8,103.0 746.4,102.6 745.3,106.0 746.1,107.2 748.9,107.5 749.0,103.2Z" fill="#fef2ef"/>
<path d="M704.5,64.6 702.0,67.2 706.0,69.2 706.7,68.0 706.3,65.4Z" fill="#fef2ef"/>
<path d="M699.2,87.5 698.2,89.5 699.2,93.4 699.7,93.6 700.6,93.4 702.0,90.8 701.2,88.6 699.4,87.5Z" fill="#fef3f0"/>
<path d="M722.4,77.4 725.3,75.2 725.3,75.0 722.2,72.2 719.8,73.8 721.6,77.3Z" fill="#fbbba5"/>
<path d="M715.3,96.2 714.9,92.6 713.1,92.3 710.5,94.0 714.2,97.1Z" fill="#fef3ef"/>
<path d="M694.2,73.7 693.3,74.2 689.0,75.4 688.9,75.7 688.9,76.0 692.6,78.3 693.2,78.2Z" fill="#fef3f0"/>
<path d="M718.0,122.1 715.6,123.6 715.8,126.2 717.3,127.1 720.3,126.2 720.5,124.9Z" fill="#fef6f4"/>
<path d="M720.3,126.2 721.6,127.6 724.8,126.4 724.0,123.5 722.6,123.2 720.5,124.9Z" fill="#fde7df"/>
<path d="M694.6,116.4 694.3,114.6 692.8,113.5 690.2,115.8 690.4,116.7 693.7,117.2Z" fill="#fef4f1"/>
<path d="M685.7,115.9 686.0,118.5 686.7,119.0 689.5,119.2 690.4,116.7 690.2,115.8 689.1,114.9Z" fill="#fdeee9"/>
<path d="M737.2,153.2 733.9,152.6 733.3,153.3 733.5,156.1 735.9,156.5Z" fill="#fde8e1"/>
<path d="M721.7,130.7 724.1,131.4 726.6,129.7 726.9,127.3 724.8,126.4 721.6,127.6Z" fill="#fef1ed"/>
<path d="M708.8,142.6 709.8,144.1 710.8,144.1 713.4,141.7 712.4,140.2 710.4,139.6Z" fill="#fef5f3"/>
<path d="M750.4,110.1 749.6,108.2 748.9,107.5 746.1,107.2 744.1,110.1 748.1,112.2 748.9,111.6 749.6,111.9Z" fill="#fef2ee"/>
<path d="M713.5,146.1 710.8,144.1 709.8,144.1 709.1,145.6 711.2,148.3 712.1,148.5Z" fill="#fef3f1"/>
<path d="M746.6,96.5 748.9,93.5 747.8,91.5 744.6,92.0 744.5,92.2 745.4,96.2Z" fill="#fde9e2"/>
<path d="M749.6,79.1 748.8,74.9 746.9,76.7 746.8,77.6Z" fill="#f6b6a0"/>
<path d="M699.6,139.6 699.7,139.4 700.9,135.2 700.5,134.4 697.5,134.8 696.4,137.9 697.4,138.3 697.2,138.6Z" fill="#fef1ed"/>
<path d="M686.6,132.2 685.2,131.7 683.3,133.6 685.1,135.7 687.2,135.7Z" fill="#f59476"/>
<path d="M736.7,142.3 737.2,141.1 735.8,139.0 734.2,139.0 733.2,141.2 734.8,143.1Z" fill="#fef6f4"/>
<path d="M738.4,88.2 740.2,88.1 741.7,85.4 737.9,84.0 736.8,86.9Z" fill="#fef2ef"/>
<path d="M695.1,103.8 695.4,106.5 696.4,107.3 699.6,106.4 699.8,105.0 697.1,102.8Z" fill="#fcd4c6"/>
<path d="M684.9,99.9 688.3,100.5 689.2,99.3 687.7,96.1 686.9,95.8 684.7,99.4 684.5,99.4Z" fill="#fdeae4"/>
<path d="M708.4,82.0 705.7,80.0 704.5,83.0 705.0,84.2 707.9,83.9Z" fill="#fef3f0"/>
<path d="M693.9,85.4 695.5,83.8 693.8,81.9 691.2,82.5 692.0,85.0Z" fill="#fdede8"/>
<path d="M725.1,93.5 724.7,96.6 726.4,97.9 728.4,97.2 728.8,96.2 728.1,94.1 726.0,92.9 725.9,92.9Z" fill="#fef1ee"/>
<path d="M728.4,84.6 728.9,85.1 731.6,85.4 732.9,84.3 733.2,83.6 731.6,80.6 730.5,80.1 729.4,80.3 728.2,83.6Z" fill="#f8b8a2"/>
<path d="M682.4,119.8 686.0,118.5 685.7,115.9 684.3,114.5 683.1,114.3 680.0,116.8 681.6,119.3Z" fill="#fef1ee"/>
<path d="M694.5,155.2 698.3,154.3 695.8,151.1 695.7,151.1 692.9,152.1 692.9,152.1Z" fill="#fbccbd"/>
<path d="M712.3,83.1 713.4,79.6 713.1,79.1 710.7,78.1 710.5,78.3 709.7,81.4 712.1,83.1Z" fill="#fef3ef"/>
<path d="M690.0,94.7 690.9,92.5 690.3,91.1 690.2,91.1 685.6,91.7 687.7,94.6 686.9,95.8 687.7,96.1Z" fill="#fef5f3"/>
<path d="M724.8,126.4 726.9,127.3 728.1,126.5 726.7,122.1 726.4,121.8 724.0,123.5Z" fill="#fde4db"/>
<path d="M690.0,122.8 690.0,119.9 689.5,119.2 686.7,119.0 686.3,122.1 687.4,123.3 689.4,123.4Z" fill="#fef5f2"/>
<path d="M706.2,126.8 707.7,126.6 707.7,122.1 705.6,121.8 704.0,125.4Z" fill="#fcdcd0"/>
<path d="M703.9,96.4 702.7,97.9 703.5,101.0 707.7,99.3Z" fill="#fef3ef"/>
<path d="M731.3,132.5 732.9,135.2 734.9,133.0 734.6,132.7 733.8,130.5Z" fill="#fef3f0"/>
<path d="M695.7,151.1 695.4,147.7 693.7,146.4 692.9,152.1Z" fill="#fef4f2"/>
<path d="M716.3,66.8 715.6,69.5 718.1,70.0 719.4,68.7 718.6,67.1Z" fill="#fef3f0"/>
<path d="M701.8,67.2 702.5,70.0 700.3,70.9 702.1,71.9 706.1,69.9 706.0,69.2 702.0,67.2Z" fill="#fef5f3"/>
<path d="M690.7,129.2 689.9,128.4 685.7,127.0 684.9,127.9 684.9,131.4 685.2,131.7 686.6,132.2 690.6,129.5Z" fill="#fef5f3"/>
<path d="M715.2,133.4 713.9,133.6 712.2,135.5 714.1,137.8 716.0,137.9 717.6,136.2Z" fill="#fef3ef"/>
<path d="M722.6,112.1 724.9,108.2 722.7,107.5 720.2,108.8 719.5,110.2 719.8,111.4 720.3,111.9Z" fill="#fef1ed"/>
<path d="M708.6,121.6 707.7,122.1 707.7,126.6 709.6,127.3 710.8,126.3 711.8,122.9Z" fill="#fef1ee"/>
<path d="M709.9,89.1 708.2,92.0 708.3,93.5 709.2,94.2 710.5,94.0 713.1,92.3 712.4,90.1Z" fill="#fef1ed"/>
<path d="M697.0,119.7 694.7,121.0 694.5,122.6 696.9,124.3 697.9,124.2 699.2,120.4 699.0,120.0Z" fill="#fbc7b5"/>
<path d="M690.4,116.7 689.5,119.2 690.0,119.9 693.6,119.9 693.7,117.2Z" fill="#fde4db"/>
<path d="M727.1,113.6 726.3,112.9 723.1,112.6 723.3,116.1 725.2,116.3 727.0,115.2Z" fill="#fef5f3"/>
<path d="M744.4,96.8 745.4,96.2 744.5,92.2 740.8,93.0 740.8,95.5Z" fill="#fef2ee"/>
<path d="M703.2,112.9 703.3,112.6 702.3,110.4 699.8,110.2 697.8,112.2 699.8,114.9 700.2,115.1Z" fill="#fcdcd0"/>
<path d="M743.3,110.3 744.1,110.1 746.1,107.2 745.3,106.0 743.3,105.7 741.3,107.6 742.7,110.2Z" fill="#fdf0ec"/>
<path d="M686.3,122.1 686.7,119.0 686.0,118.5 682.4,119.8 683.2,122.5Z" fill="#fef6f4"/>
<path d="M728.0,88.2 729.1,89.7 730.4,90.0 732.3,89.0 731.6,85.4 728.9,85.1Z" fill="#fef3f0"/>
<path d="M701.3,151.8 699.7,154.0 700.8,153.8 704.7,155.3 704.5,154.2 701.7,151.8Z" fill="#fdebe5"/>
<path d="M710.6,135.8 710.1,138.9 710.4,139.6 712.4,140.2 714.1,137.8 712.2,135.5Z" fill="#fef2ee"/>
<path d="M713.2,119.9 712.9,122.2 715.6,123.6 718.0,122.1 718.2,121.5 716.6,118.5 714.3,118.7Z" fill="#fef1ed"/>
<path d="M689.6,109.6 692.2,109.1 692.7,106.9 691.6,105.9 688.7,107.1Z" fill="#fef5f3"/>
<path d="M720.1,146.8 719.5,149.2 721.0,151.7 723.0,152.2 723.4,151.9 724.1,148.1 722.7,146.9Z" fill="#fef1ee"/>
<path d="M729.2,68.9 731.1,69.1 732.1,66.7 731.4,64.6 730.0,64.8 728.2,66.3Z" fill="#fdf0ec"/>
<path d="M709.5,87.0 715.2,86.6 716.0,85.5 715.9,85.4 712.3,83.1 712.1,83.1 709.4,85.7Z" fill="#fef5f3"/>
<path d="M727.0,115.2 725.2,116.3 725.7,120.0 726.3,120.5 728.9,118.6 729.2,117.0Z" fill="#fef2ef"/>
<path d="M694.7,80.0 693.8,81.9 695.5,83.8 696.6,83.9 697.8,82.3 697.6,80.8Z" fill="#fef1ed"/>
<path d="M747.9,97.8 746.6,96.5 745.4,96.2 744.4,96.8 743.7,98.5 744.7,101.6 745.7,101.9Z" fill="#fef6f4"/>
<path d="M717.7,78.5 717.1,81.3 720.8,81.4 720.7,78.3Z" fill="#fcbca6"/>
<path d="M709.0,118.2 708.6,121.6 711.8,122.9 712.9,122.2 713.2,119.9 709.3,118.0Z" fill="#fce2d8"/>
<path d="M733.2,150.4 733.7,148.9 731.3,146.8 730.2,147.0 728.9,149.7 730.0,150.8Z" fill="#fdf0ec"/>
<path d="M703.9,96.4 704.1,95.0 700.6,93.4 699.7,93.6 699.7,97.5 700.0,97.9 702.7,97.9Z" fill="#fef3ef"/>
<path d="M707.0,75.3 705.4,77.1 705.7,79.1 710.5,78.3 710.7,78.1 710.6,77.2Z" fill="#fef4f1"/>
<path d="M701.3,151.8 699.4,149.3 695.8,151.1 698.3,154.3 699.7,154.0Z" fill="#fbcaba"/>
<path d="M689.7,99.3 692.8,97.0 690.0,94.7 687.7,96.1 689.2,99.3Z" fill="#fef6f4"/>
<path d="M691.2,82.5 689.8,81.8 688.8,81.7 688.0,86.7 690.9,86.6 692.0,85.0Z" fill="#fef1ed"/>
<path d="M740.8,71.1 744.6,71.2 744.7,70.8 743.6,67.5 741.7,67.6 740.4,69.6Z" fill="#f4b49e"/>
<path d="M739.1,140.5 742.1,143.3 745.0,140.8 740.0,136.9Z" fill="#fef5f3"/>
<path d="M722.6,123.2 721.6,119.9 718.2,121.5 718.0,122.1 720.5,124.9Z" fill="#fef4f1"/>
<path d="M723.3,116.1 721.3,117.2 721.7,119.6 725.7,120.0 725.2,116.3Z" fill="#fef2ef"/>
<path d="M730.5,153.9 733.3,153.3 733.9,152.6 733.2,150.4 730.0,150.8 729.6,153.0Z" fill="#fef6f4"/>
<path d="M710.8,72.9 707.0,73.6 707.0,75.3 710.6,77.2 711.9,74.2Z" fill="#fcddd1"/>
<path d="M730.2,110.2 729.7,109.8 726.1,109.5 726.3,112.9 727.1,113.6 729.9,112.0Z" fill="#fef5f2"/>
<path d="M749.2,98.1 750.6,99.6 751.8,99.7 752.7,96.7 751.9,94.3Z" fill="#fef1ed"/>
<path d="M730.7,116.5 731.4,113.6 729.9,112.0 727.1,113.6 727.0,115.2 729.2,117.0Z" fill="#fdf0ec"/>
<path d="M704.8,120.7 706.3,117.6 705.7,116.7 701.4,117.3 703.8,120.6Z" fill="#fef1ed"/>
<path d="M712.1,102.1 712.2,102.9 714.2,104.5 715.5,104.4 716.0,100.6 713.8,99.4Z" fill="#fef2ef"/>
<path d="M721.7,119.6 721.6,119.9 722.6,123.2 724.0,123.5 726.4,121.8 726.3,120.5 725.7,120.0Z" fill="#f6a084"/>
<path d="M701.8,124.5 699.5,125.1 699.1,128.7 701.6,129.1 703.1,125.4Z" fill="#fbcfbf"/>
<path d="M716.1,62.0 717.9,63.0 718.3,60.7 715.8,59.8Z" fill="#f9bca7"/>
<path d="M697.5,134.8 700.5,134.4 700.7,133.6 697.6,130.5 695.7,132.8Z" fill="#fef1ee"/>
<path d="M734.3,79.0 733.3,76.3 731.5,76.6 730.5,80.1 731.6,80.6Z" fill="#fbd3c5"/>
<path d="M694.5,122.6 693.3,123.4 692.7,128.0 695.4,127.9 696.9,124.3Z" fill="#fef1ee"/>
<path d="M690.9,92.5 693.3,93.1 695.0,91.9 695.2,90.5 693.7,88.8 692.4,88.9 690.3,91.1Z" fill="#fef1ed"/>
<path d="M705.4,89.1 708.2,92.0 709.9,89.1 709.5,87.1 705.3,87.9Z" fill="#fef3f0"/>
<path d="M707.3,156.3 708.7,156.9 712.0,156.0 712.4,155.4 711.7,152.9 709.2,152.6Z" fill="#fef4f2"/>
<path d="M716.9,112.9 719.8,111.4 719.5,110.2 716.0,108.8 714.3,109.6 714.0,110.3Z" fill="#fbd1c3"/>
<path d="M714.0,110.3 714.3,109.6 712.7,106.9 710.1,106.8 710.0,106.9 709.6,108.5 711.8,111.7 712.0,111.8Z" fill="#fac0ac"/>
<path d="M711.7,68.7 714.8,70.0 715.6,69.5 716.3,66.8 715.7,65.8 713.9,65.2 711.3,66.8Z" fill="#fef4f2"/>
<path d="M711.2,148.3 709.1,145.6 707.5,146.5 708.1,150.0Z" fill="#fef5f3"/>
<path d="M704.3,149.5 703.8,147.7 702.7,147.3 699.6,148.4 699.4,149.3 701.3,151.8 701.7,151.8Z" fill="#fcdbce"/>
<path d="M746.1,81.8 746.2,84.2 748.0,85.2 749.3,81.4Z" fill="#fbd1c2"/>
<path d="M706.4,70.2 706.7,73.2 707.0,73.6 710.8,72.9 710.6,70.4Z" fill="#fbccbc"/>
<path d="M732.8,103.0 732.9,102.5 731.5,100.3 730.0,100.3 727.3,102.1 730.2,105.0Z" fill="#fef1ed"/>
<path d="M732.1,66.7 735.2,66.9 736.3,64.7 735.9,63.3 734.2,64.0 731.4,64.6Z" fill="#fce1d7"/>
<path d="M698.4,146.5 699.6,148.4 702.7,147.3 701.7,144.7 698.5,144.4Z" fill="#fef5f3"/>
<path d="M710.5,94.0 709.2,94.2 709.1,98.0 713.6,98.8 714.2,97.1Z" fill="#fef4f2"/>
<path d="M693.7,88.8 695.2,90.5 698.2,89.5 699.2,87.5 698.1,86.7 694.5,87.4Z" fill="#fef3ef"/>
<path d="M728.2,83.6 729.4,80.3 727.2,78.7 724.7,80.2 724.2,81.6Z" fill="#f9b9a3"/>
<path d="M704.9,142.7 703.1,143.0 701.7,144.7 702.7,147.3 703.8,147.7 705.6,146.1Z" fill="#f9bca7"/>
<path d="M709.8,128.4 707.2,131.8 707.2,132.5 708.9,134.0 711.5,131.1 711.5,130.1Z" fill="#fde4db"/>
<path d="M701.3,79.4 698.2,79.9 697.6,80.8 697.8,82.3 700.6,82.9 701.6,81.9 701.6,79.7Z" fill="#fce3d9"/>
<path d="M722.6,136.7 725.3,134.7 724.1,131.4 721.7,130.7 720.6,131.5 719.9,136.0Z" fill="#fcd4c6"/>
<path d="M713.2,150.4 716.2,149.4 716.2,147.5 714.0,145.9 713.5,146.1 712.1,148.5Z" fill="#fef5f2"/>
<path d="M705.0,129.7 702.7,130.4 702.5,131.9 705.0,133.6 707.2,132.5 707.2,131.8Z" fill="#fef6f4"/>
<path d="M717.5,91.9 716.4,91.7 714.9,92.6 715.3,96.2 718.0,96.6 719.6,95.1Z" fill="#fef3f0"/>
<path d="M729.0,106.6 729.7,109.8 730.2,110.2 733.1,108.9 733.2,108.1 730.1,105.4Z" fill="#fef5f3"/>
<path d="M716.2,149.4 716.6,149.6 719.5,149.2 720.1,146.8 719.6,146.1 718.4,145.8 716.2,147.5Z" fill="#fdf0ec"/>
<path d="M723.2,87.8 720.9,89.8 722.2,93.4 725.1,93.5 725.9,92.9 724.4,88.6 723.4,87.8Z" fill="#fef6f3"/>
<path d="M692.7,106.9 692.2,109.1 693.7,110.6 695.9,110.2 696.4,107.3 695.4,106.5Z" fill="#fef2ee"/>
<path d="M693.8,133.2 693.5,136.8 696.4,137.9 697.5,134.8 695.7,132.8Z" fill="#f29173"/>
<path d="M706.1,69.9 702.1,71.9 703.0,73.9 706.7,73.2 706.4,70.2Z" fill="#fef5f2"/>
<path d="M716.5,85.6 720.0,89.8 720.9,89.8 723.2,87.8 719.4,85.2Z" fill="#fef3f0"/>
<path d="M739.1,75.0 741.1,79.0 743.0,78.0 743.6,74.6 739.4,74.0Z" fill="#f9b9a3"/>
<path d="M716.9,143.8 718.4,145.8 719.6,146.1 721.3,141.9 719.7,141.0 718.5,141.3Z" fill="#fdf0ec"/>
<path d="M682.4,119.8 681.6,119.3 682.2,120.3 680.1,122.9 681.3,124.8 682.7,124.2 683.2,122.5Z" fill="#fce1d6"/>
<path d="M712.3,61.5 713.8,63.0 716.1,62.0 715.8,59.8 714.2,59.3Z" fill="#fdebe5"/>
<path d="M706.6,109.8 704.8,107.4 703.4,108.0 702.3,110.4 703.3,112.6 706.6,110.2Z" fill="#fbd1c3"/>
<path d="M717.0,153.7 715.6,156.2 716.4,158.5 720.2,156.9 720.4,156.9 720.4,156.8 718.0,153.5 717.5,153.5Z" fill="#fef4f1"/>
<path d="M732.9,89.3 734.3,89.1 736.1,87.0 732.9,84.3 731.6,85.4 732.3,89.0Z" fill="#fdf0ec"/>
<path d="M727.2,77.4 729.9,75.4 729.7,73.5 727.5,72.6 725.3,75.0 725.3,75.2Z" fill="#fabaa4"/>
<path d="M692.9,152.1 692.3,155.7 694.5,155.2Z" fill="#fef2ef"/>
<path d="M746.9,76.7 744.1,74.4 743.6,74.6 743.0,78.0 745.8,78.5 746.8,77.6Z" fill="#f9b9a3"/>
<path d="M709.9,116.6 708.0,113.4 705.8,114.7 705.7,116.7 706.3,117.6 709.0,118.2 709.3,118.0Z" fill="#fce1d7"/>
<path d="M682.7,124.2 685.4,125.9 687.4,123.3 686.3,122.1 683.2,122.5Z" fill="#fef2ee"/>
<path d="M716.6,118.5 718.2,121.5 721.6,119.9 721.7,119.6 721.3,117.2 720.0,116.4 717.9,116.7Z" fill="#fef5f2"/>
<path d="M725.3,75.0 727.5,72.6 726.8,70.4 726.2,70.1 722.2,72.2 722.2,72.2Z" fill="#fef3f0"/>
<path d="M736.8,86.9 737.9,84.0 737.7,83.7 735.5,82.6 733.2,83.6 732.9,84.3 736.1,87.0Z" fill="#fef4f2"/>
<path d="M726.8,153.3 729.6,153.0 730.0,150.8 728.9,149.7 728.0,149.7 725.8,152.4Z" fill="#fef4f1"/>
<path d="M722.2,72.2 722.2,72.2 721.5,69.4 720.0,69.8 719.4,68.7 718.1,70.0 719.1,73.7 719.8,73.8Z" fill="#fdf0ec"/>
<path d="M696.9,124.3 695.4,127.9 697.7,129.5 699.1,128.7 699.5,125.1 697.9,124.2Z" fill="#fef3f0"/>
<path d="M750.6,99.6 748.8,103.0 749.0,103.2 752.5,103.9 751.5,100.8 751.8,99.7Z" fill="#fef3f0"/>
<path d="M722.8,153.5 720.4,156.8 720.4,156.9 724.3,156.5Z" fill="#fde5dc"/>
<path d="M739.2,96.9 739.0,99.1 740.2,99.6 743.7,98.5 744.4,96.8 740.8,95.5Z" fill="#fef4f1"/>
<path d="M709.4,85.7 712.1,83.1 709.7,81.4 708.4,82.0 707.9,83.9Z" fill="#fef5f2"/>
<path d="M682.0,111.3 683.1,114.3 684.3,114.5 686.9,111.5 685.3,109.5Z" fill="#fef4f2"/>
<path d="M720.8,81.4 717.1,81.3 716.9,81.5 715.9,85.4 716.0,85.5 716.5,85.6 719.4,85.2 721.8,82.3Z" fill="#fef4f1"/>
<path d="M732.4,136.5 734.2,139.0 735.8,139.0 738.1,136.1 732.9,135.5Z" fill="#fef5f3"/>
<path d="M748.9,93.5 751.8,93.9 751.0,91.8 749.2,88.7 747.8,91.5Z" fill="#fde6de"/>
<path d="M750.7,110.1 750.4,110.1 749.6,111.9 753.2,113.6 754.9,111.6 754.8,111.5Z" fill="#fef3f1"/>
<path d="M744.5,92.2 744.6,92.0 744.1,89.7 740.9,89.2 740.3,92.4 740.8,93.0Z" fill="#fce1d7"/>
<path d="M706.7,68.0 711.2,66.8 710.3,65.4 707.8,64.4 706.3,65.4Z" fill="#fef3f0"/>
<path d="M728.2,144.2 730.5,143.0 730.9,141.3 729.3,139.4 727.0,141.9Z" fill="#fef2ee"/>
<path d="M700.0,97.9 699.7,97.5 695.1,97.5 695.2,98.8 697.5,101.0 699.5,100.4Z" fill="#fef5f2"/>
<path d="M710.2,104.4 707.7,102.9 705.4,104.7 705.5,105.5 710.0,106.9 710.1,106.8Z" fill="#fdf0ec"/>
<path d="M723.1,112.6 722.6,112.1 720.3,111.9 720.0,116.4 721.3,117.2 723.3,116.1Z" fill="#fef5f2"/>
<path d="M718.5,74.0 714.9,72.7 713.3,74.0 715.3,77.1 716.8,77.1Z" fill="#fcd8cb"/>
<path d="M736.3,110.7 734.7,110.5 733.4,113.4 735.0,115.3 737.0,113.3Z" fill="#fef3f1"/>
<path d="M736.0,69.6 738.1,68.6 738.6,65.9 736.3,64.7 735.2,66.9 735.9,69.5Z" fill="#fcdfd4"/>
<path d="M735.5,82.6 735.9,79.6 734.3,79.0 731.6,80.6 733.2,83.6Z" fill="#fdd2c2"/>
<path d="M705.6,141.9 708.8,142.6 710.4,139.6 710.1,138.9 706.9,138.7 705.4,140.2Z" fill="#fef6f3"/>
<path d="M723.1,82.5 724.1,86.0 728.4,84.6 728.2,83.6 724.2,81.6Z" fill="#fef6f4"/>
<path d="M714.1,129.4 716.3,131.3 717.5,130.7 717.3,127.1 715.8,126.2 714.6,126.9Z" fill="#fef2ef"/>
<path d="M722.4,98.0 724.7,96.6 725.1,93.5 722.2,93.4 720.2,95.1Z" fill="#fcd7c9"/>
<path d="M739.1,140.5 737.2,141.1 736.7,142.3 739.7,145.3 741.8,143.7 742.1,143.3Z" fill="#fef1ed"/>
<path d="M731.9,70.2 731.8,72.0 734.0,73.8 736.8,72.3 736.0,69.6 735.9,69.5Z" fill="#fef4f1"/>
<path d="M726.2,70.1 726.8,70.4 729.2,68.9 728.2,66.3 725.8,68.2 725.2,68.3Z" fill="#fef6f4"/>
<path d="M730.4,90.0 730.5,92.9 732.7,93.9 733.5,93.2 732.9,89.3 732.3,89.0Z" fill="#fef2ef"/>
<path d="M727.2,78.7 727.2,77.4 725.3,75.2 722.4,77.4 724.7,80.2Z" fill="#f4b49e"/>
<path d="M713.4,79.6 712.3,83.1 715.9,85.4 716.9,81.5Z" fill="#fce3da"/>
<path d="M736.5,93.0 736.9,95.2 739.2,96.9 740.8,95.5 740.8,93.0 740.3,92.4 737.2,92.1Z" fill="#fef4f2"/>
<path d="M733.9,75.5 733.3,76.3 734.3,79.0 735.9,79.6 736.5,79.3 737.0,76.5Z" fill="#f6cbbb"/>
<path d="M732.9,135.2 732.9,135.5 738.1,136.1 738.6,135.9 734.9,133.0Z" fill="#fef2ef"/>
<path d="M710.9,61.4 710.5,61.1 708.9,61.2 707.7,62.2 707.8,64.4 710.3,65.4Z" fill="#fce1d7"/>
<path d="M740.0,114.4 736.9,117.2 738.3,119.0 742.3,116.3Z" fill="#fef4f1"/>
<path d="M726.3,112.9 726.1,109.5 724.9,108.2 724.9,108.2 722.6,112.1 723.1,112.6Z" fill="#fef3f0"/>
<path d="M688.6,107.1 688.7,107.1 691.6,105.9 691.7,103.7 688.1,103.0 687.7,103.5Z" fill="#fbc9b8"/>
<path d="M714.2,104.5 712.2,102.9 710.2,104.4 710.1,106.8 712.7,106.9Z" fill="#fef2ef"/>
<path d="M705.4,140.2 706.9,138.7 706.7,136.6 704.5,135.7 704.0,136.0 703.7,138.9Z" fill="#fef3f0"/>
<path d="M702.5,75.7 703.0,73.9 702.1,71.9 700.3,70.9 698.6,71.6 699.7,76.0 701.1,76.5Z" fill="#fce3da"/>
<path d="M702.3,60.7 702.8,61.6 704.0,62.0 704.7,61.6 706.6,57.6 703.2,57.1Z" fill="#f8af96"/>
<path d="M708.9,61.2 710.5,61.1 710.7,58.2 706.6,57.6Z" fill="#fdf0ec"/>
<path d="M737.9,84.0 741.7,85.4 741.8,85.3 742.2,81.7 740.8,80.0 740.0,80.2 737.7,83.7Z" fill="#fde4db"/>
<path d="M692.6,112.6 693.7,110.6 692.2,109.1 689.6,109.6 688.9,111.4Z" fill="#fef5f3"/>
<path d="M718.0,153.5 721.0,151.7 719.5,149.2 716.6,149.6 717.5,153.5Z" fill="#fef3f1"/>
<path d="M687.4,123.3 685.4,125.9 685.7,127.0 689.9,128.4 689.4,123.4Z" fill="#fef4f2"/>
<path d="M708.9,134.0 709.1,134.7 710.6,135.8 712.2,135.5 713.9,133.6 711.5,131.1Z" fill="#fef3ef"/>
<path d="M705.0,133.6 704.5,135.7 706.7,136.6 709.1,134.7 708.9,134.0 707.2,132.5Z" fill="#fef2ef"/>
<path d="M745.0,72.4 748.5,73.2 748.1,71.4 748.1,71.1 747.5,70.7 746.8,69.6 744.7,70.8 744.6,71.2Z" fill="#f7b7a1"/>
<path d="M725.3,134.7 725.6,134.8 728.2,134.0 729.6,131.9 726.6,129.7 724.1,131.4Z" fill="#fdeee9"/>
<path d="M734.7,106.2 738.2,105.7 738.4,104.7 737.2,101.4 732.9,102.5 732.8,103.0Z" fill="#fef6f4"/>
<path d="M715.7,65.8 716.3,66.8 718.6,67.1 717.5,64.8 717.8,63.5Z" fill="#fef6f4"/>
<path d="M699.1,128.7 697.7,129.5 697.6,130.5 700.7,133.6 702.5,131.9 702.7,130.4 701.6,129.1Z" fill="#fdf0ec"/>
<path d="M697.8,112.2 697.8,112.2 694.3,114.6 694.6,116.4 696.0,116.8 699.8,114.9Z" fill="#fef1ee"/>
<path d="M712.0,156.0 708.7,156.9 708.8,156.9 712.0,158.4Z" fill="#fef4f1"/>
<path d="M718.3,105.1 720.2,108.8 722.7,107.5 721.7,104.4 720.2,103.5Z" fill="#fef2ee"/>
<path d="M740.4,69.6 741.7,67.6 740.3,65.5 738.6,65.9 738.1,68.6Z" fill="#fef3f0"/>
<path d="M693.8,81.9 694.7,80.0 694.3,79.0 693.2,78.2 692.6,78.3 689.8,81.8 691.2,82.5Z" fill="#fce3da"/>
<path d="M710.8,126.3 709.6,127.3 709.8,128.4 711.5,130.1 714.1,129.4 714.6,126.9Z" fill="#fef4f1"/>
<path d="M729.4,80.3 730.5,80.1 731.5,76.6 729.9,75.4 727.2,77.4 727.2,78.7Z" fill="#f7b7a1"/>
<path d="M682.8,128.3 682.2,130.5 684.9,131.4 684.9,127.9Z" fill="#fcdfd4"/>
<path d="M722.6,136.7 723.9,139.9 727.2,138.0 725.6,134.8 725.3,134.7Z" fill="#fef1ed"/>
<path d="M724.4,88.6 725.9,92.9 726.0,92.9 729.1,89.7 728.0,88.2Z" fill="#fef6f4"/>
<path d="M701.2,88.6 702.0,90.8 704.0,91.0 705.4,89.1 705.3,87.9 705.3,87.8Z" fill="#fef1ed"/>
<path d="M682.1,103.5 681.6,99.8 678.8,100.1 680.0,104.5Z" fill="#fdede8"/>
<path d="M716.0,137.9 714.1,137.8 712.4,140.2 713.4,141.7 713.9,141.9 716.3,140.1Z" fill="#fef4f1"/>
<path d="M695.0,91.9 693.3,93.1 694.4,96.9 695.0,97.3 697.4,93.8Z" fill="#fef6f4"/>
<path d="M702.8,61.6 702.3,60.7 699.5,59.8 700.0,62.0 700.6,63.7Z" fill="#fbc9b8"/>
<path d="M693.2,78.2 694.3,79.0 697.3,76.9 697.3,76.9 694.6,73.6 694.2,73.7Z" fill="#fef6f4"/>
<path d="M715.6,156.2 712.4,155.4 712.0,156.0 712.0,158.4 714.3,159.4 716.4,158.5Z" fill="#fef1ed"/>
<path d="M727.1,156.1 730.1,155.8 730.5,153.9 729.6,153.0 726.8,153.3Z" fill="#fcddd2"/>
<path d="M736.9,117.2 735.1,116.7 733.8,117.8 733.5,120.3 737.5,119.6 738.3,119.0Z" fill="#fac4b2"/>
<path d="M709.1,98.0 708.1,99.3 708.4,100.2 712.1,102.1 713.8,99.4 713.6,98.8Z" fill="#fef4f2"/>
<path d="M684.9,131.4 682.2,130.5 681.8,131.8 683.3,133.6 685.2,131.7Z" fill="#fef4f1"/>
<path d="M731.3,146.8 732.0,144.9 730.5,143.0 728.2,144.2 727.8,145.5 730.2,147.0Z" fill="#fef6f3"/>
<path d="M737.2,153.2 735.9,156.5 738.0,156.9 738.0,152.9Z" fill="#fac4b2"/>
<path d="M705.4,77.1 707.0,75.3 707.0,73.6 706.7,73.2 703.0,73.9 702.5,75.7Z" fill="#fef3f0"/>
<path d="M699.7,76.0 697.3,76.9 697.3,76.9 698.2,79.9 701.3,79.4 701.1,76.5Z" fill="#fcd5c8"/>
<path d="M694.5,87.4 698.1,86.7 696.6,83.9 695.5,83.8 693.9,85.4Z" fill="#fef5f2"/>
</g>
<path d="M687.2,157.5 686.0,163.1 679.6,168.7 679.6,173.0 685.6,170.5 687.7,176.6 694.9,176.0 699.1,170.5 704.1,177.2 706.7,169.3 713.4,172.4 716.4,168.7 716.4,164.4 709.2,162.5 708.8,156.9 700.8,153.8 692.3,155.7Z" fill="#fdeee9"/>
<g stroke="#fbeee9" stroke-width="0.35">
<path d="M695.4,162.8 698.7,164.5 701.0,160.1 700.5,158.7 696.0,160.2 695.2,161.4Z" fill="#fde5dd"/>
<path d="M693.5,173.1 692.4,173.0 691.1,173.7 689.9,176.4 694.9,176.0 695.4,175.3Z" fill="#fde4db"/>
<path d="M713.5,172.2 716.4,168.7 716.4,164.4 711.2,163.0 711.8,169.2Z" fill="#fdc4af"/>
<path d="M703.9,170.5 700.9,172.9 704.1,177.2 705.9,171.7Z" fill="#fac1ac"/>
<path d="M707.0,157.1 706.0,162.3 707.3,163.4 710.5,162.8 709.2,162.5 708.8,156.9 707.5,156.4Z" fill="#fcdbcf"/>
<path d="M692.4,173.0 693.5,173.1 696.1,169.3 693.1,167.0 690.8,169.4Z" fill="#fbd1c2"/>
<path d="M707.3,163.4 707.3,165.8 711.8,169.2 711.2,163.0 710.5,162.8Z" fill="#f7bea9"/>
<path d="M692.7,165.4 693.1,167.0 696.1,169.3 696.1,169.3 699.5,165.9 698.7,164.5 695.4,162.8Z" fill="#fde6de"/>
<path d="M690.6,159.4 687.9,159.9 690.4,164.4 692.7,165.4 695.4,162.8 695.2,161.4Z" fill="#fdede8"/>
<path d="M701.0,160.1 704.7,162.5 706.0,162.3 707.0,157.1 700.6,158.5 700.5,158.7Z" fill="#fde7e0"/>
<path d="M686.0,171.9 687.7,176.6 689.9,176.4 691.1,173.7 686.3,171.4Z" fill="#fcddd1"/>
<path d="M679.6,168.9 679.6,173.0 685.6,170.5 686.0,171.9 686.3,171.4 686.3,169.8Z" fill="#fcd4c7"/>
<path d="M686.7,168.3 684.4,164.6 679.6,168.7 679.6,168.9 686.3,169.8 686.8,169.0Z" fill="#fcdfd4"/>
<path d="M703.9,170.5 705.9,171.7 706.7,169.3 713.4,172.4 713.5,172.2 711.8,169.2 707.3,165.8 703.8,169.8Z" fill="#fcc3ae"/>
<path d="M701.4,166.6 703.8,169.8 707.3,165.8 707.3,163.4 706.0,162.3 704.7,162.5Z" fill="#fac1ac"/>
<path d="M686.3,169.8 686.3,171.4 691.1,173.7 692.4,173.0 690.8,169.4 686.8,169.0Z" fill="#fdece6"/>
<path d="M696.1,169.3 693.5,173.1 695.4,175.3 698.4,171.4 696.1,169.3Z" fill="#fde4dc"/>
<path d="M690.4,164.4 687.9,159.9 686.8,159.5 686.0,163.1 684.4,164.6 686.7,168.3Z" fill="#fde6de"/>
<path d="M699.5,165.9 701.4,166.6 704.7,162.5 701.0,160.1 698.7,164.5Z" fill="#f5bca7"/>
<path d="M696.0,160.2 694.6,155.2 690.6,159.4 695.2,161.4Z" fill="#fde5dc"/>
<path d="M687.9,159.9 690.6,159.4 694.6,155.2 694.6,155.1 692.3,155.7 687.2,157.5 686.8,159.5Z" fill="#fdede8"/>
<path d="M707.0,157.1 707.5,156.4 701.7,154.1 700.2,157.1 700.6,158.5Z" fill="#fbd2c3"/>
<path d="M694.6,155.2 696.0,160.2 700.5,158.7 700.6,158.5 700.2,157.1 695.9,154.9 694.6,155.1Z" fill="#fce2d9"/>
<path d="M699.5,165.9 696.1,169.3 698.4,171.4 699.1,170.5 700.9,172.9 703.9,170.5 703.8,169.8 701.4,166.6Z" fill="#fec5b0"/>
<path d="M701.7,154.1 700.8,153.8 695.9,154.9 700.2,157.1Z" fill="#fcdcd0"/>
<path d="M690.8,169.4 693.1,167.0 692.7,165.4 690.4,164.4 686.7,168.3 686.8,169.0Z" fill="#fde4db"/>
</g>
<path d="M716.4,164.4 722.7,163.8 730.3,163.1 732.9,166.8 743.9,169.1 751.0,170.5 760.3,166.8 764.1,164.7 767.5,158.2 772.6,154.4 773.0,150.6 771.3,143.0 764.1,141.1 754.9,137.9 752.3,143.0 745.0,140.8 741.8,143.7 736.3,148.1 738.0,152.5 738.0,156.9 731.2,155.7 720.2,156.9 714.3,159.4 708.8,156.9 709.2,162.5Z" fill="#fde3da"/>
<g stroke="#fbe8e1" stroke-width="0.35">
<path d="M759.5,160.0 761.6,160.4 762.9,158.9 762.5,156.8 758.8,155.1 758.6,155.3 758.5,155.7 759.4,159.9Z" fill="#fcd5c7"/>
<path d="M731.0,159.3 729.3,158.3 726.0,160.4 727.8,163.3 729.6,163.2 731.2,161.4Z" fill="#fcd5c7"/>
<path d="M746.9,158.8 746.0,159.0 744.5,160.6 744.8,162.4 745.0,162.6 747.4,162.5 748.3,160.6 747.5,159.0Z" fill="#fbcfbf"/>
<path d="M757.3,141.3 759.7,142.4 760.4,142.1 761.4,140.2 757.8,138.9Z" fill="#f8ad94"/>
<path d="M757.4,146.2 755.1,144.5 753.4,144.6 752.7,145.3 752.9,148.3 755.4,149.1Z" fill="#fbc8b6"/>
<path d="M748.3,160.6 751.2,161.5 751.1,157.3 750.8,157.2 747.5,159.0Z" fill="#fcd7ca"/>
<path d="M757.5,163.2 757.6,164.2 758.3,164.7 761.3,164.7 762.3,162.4 761.6,160.4 759.5,160.0Z" fill="#fbc9b9"/>
<path d="M714.2,161.6 712.8,159.9 710.3,160.2 709.1,161.5 709.2,162.5 712.1,163.3Z" fill="#fce3da"/>
<path d="M744.8,162.4 744.5,160.6 742.5,159.9 741.3,160.6 740.6,163.8Z" fill="#f9b49d"/>
<path d="M725.4,160.2 725.3,156.3 720.8,156.9 724.6,160.3Z" fill="#fbcbbb"/>
<path d="M754.7,165.4 754.7,165.4 757.6,164.2 757.5,163.2 754.7,160.6 753.4,161.6Z" fill="#fdeee9"/>
<path d="M762.5,156.8 762.9,158.9 766.1,159.0 765.7,155.5 764.3,154.6Z" fill="#f69e82"/>
<path d="M747.1,155.7 745.3,154.5 744.9,154.6 744.0,156.8 746.0,159.0 746.9,158.8Z" fill="#fbcfc0"/>
<path d="M751.6,168.0 750.3,166.9 749.6,167.1 748.3,170.0 751.0,170.5 751.5,170.3Z" fill="#fbcab9"/>
<path d="M715.9,161.8 714.2,161.6 712.1,163.3 716.4,164.4 716.7,164.4Z" fill="#f8bfaa"/>
<path d="M769.3,146.0 768.2,148.1 768.4,148.7 771.5,149.3 772.6,148.6 771.9,145.4Z" fill="#fce3d9"/>
<path d="M764.4,152.7 764.1,153.5 764.3,154.6 765.7,155.5 768.2,154.9 768.6,152.7 768.1,152.1Z" fill="#fcd7ca"/>
<path d="M760.4,142.1 762.1,143.5 764.4,142.7 764.4,141.2 764.1,141.1 761.4,140.2Z" fill="#fcdace"/>
<path d="M753.9,154.0 758.6,155.3 758.8,155.1 759.1,154.2 757.4,150.9 756.1,150.5 753.7,153.5Z" fill="#fce2d9"/>
<path d="M747.3,165.9 749.6,167.1 750.3,166.9 751.1,164.8 750.7,163.5 748.3,163.8Z" fill="#fcddd2"/>
<path d="M744.8,162.4 740.6,163.8 740.6,163.8 740.6,163.9 743.0,166.3 745.3,165.6 745.0,162.6Z" fill="#fbd0c2"/>
<path d="M741.6,148.7 740.1,148.3 737.5,149.1 740.7,153.6 742.0,152.9 742.7,150.8Z" fill="#fbcdbd"/>
<path d="M748.0,146.9 746.7,147.7 746.1,150.3 747.0,151.7 749.6,152.3 750.9,151.7 751.2,149.7Z" fill="#fbd0c1"/>
<path d="M738.4,159.3 735.1,158.5 735.0,161.7 736.5,162.6 737.8,162.4Z" fill="#fde5dc"/>
<path d="M742.5,159.9 742.5,157.3 740.1,156.1 739.2,159.0 741.3,160.6Z" fill="#fcdcd0"/>
<path d="M748.4,145.8 745.8,143.1 744.5,143.4 743.6,145.5 743.8,146.3 746.7,147.7 748.0,146.9Z" fill="#fabeaa"/>
<path d="M735.1,158.5 734.7,157.8 731.0,159.3 731.2,161.4 733.7,162.3 735.0,161.7Z" fill="#fbcdbd"/>
<path d="M749.2,155.1 749.6,152.3 747.0,151.7 745.3,154.5 747.1,155.7Z" fill="#f7a78c"/>
<path d="M767.4,143.5 769.3,146.0 771.9,145.4 771.3,143.0 768.2,142.2Z" fill="#fbd1c3"/>
<path d="M765.1,146.2 768.2,148.1 769.3,146.0 767.4,143.5 766.1,144.1Z" fill="#fbcebe"/>
<path d="M712.8,159.9 714.2,161.6 715.9,161.8 716.3,161.2 716.2,158.6 714.3,159.4 713.2,158.9Z" fill="#fdebe6"/>
<path d="M768.4,148.7 768.2,148.1 765.1,146.2 763.9,146.8 763.7,147.9 764.8,149.7 767.9,149.6Z" fill="#fcd4c6"/>
<path d="M768.1,152.1 768.6,152.7 770.9,152.5 771.5,149.3 768.4,148.7 767.9,149.6Z" fill="#fdefea"/>
<path d="M719.7,160.5 720.4,161.5 724.1,160.8 724.6,160.3 720.8,156.9 720.2,156.9 720.0,157.0Z" fill="#fac5b3"/>
<path d="M770.9,152.5 768.6,152.7 768.2,154.9 769.5,156.7 772.6,154.4 772.7,153.7Z" fill="#fbc9b8"/>
<path d="M742.0,152.9 740.7,153.6 739.7,155.0 740.1,156.1 742.5,157.3 744.0,156.8 744.9,154.6Z" fill="#f9b7a0"/>
<path d="M729.3,158.3 731.0,159.3 734.7,157.8 734.8,156.3 731.2,155.7 729.2,155.9Z" fill="#fbcbbb"/>
<path d="M720.4,161.5 719.7,160.5 716.3,161.2 715.9,161.8 716.7,164.4 720.1,164.0Z" fill="#fcddd2"/>
<path d="M763.9,146.8 765.1,146.2 766.1,144.1 764.4,142.7 762.1,143.5 762.6,145.9Z" fill="#fce0d5"/>
<path d="M757.4,150.9 759.9,149.1 759.2,146.8 758.3,146.2 757.4,146.2 755.4,149.1 756.1,150.5Z" fill="#fbc8b7"/>
<path d="M758.3,164.7 757.6,164.2 754.7,165.4 754.5,167.3 755.5,168.8 758.3,167.7Z" fill="#fcddd1"/>
<path d="M749.6,152.3 749.2,155.1 750.8,157.2 751.1,157.3 752.9,156.8 753.9,154.0 753.7,153.5 750.9,151.7Z" fill="#f7a88d"/>
<path d="M749.5,145.0 752.7,145.3 753.4,144.6 752.7,142.2 752.3,143.0 749.5,142.2Z" fill="#fde8e0"/>
<path d="M756.6,141.4 757.3,141.3 757.8,138.9 754.9,137.9 753.9,139.8Z" fill="#fcd7ca"/>
<path d="M746.4,166.1 745.3,165.6 743.0,166.3 742.4,168.8 743.9,169.1 746.1,169.5Z" fill="#fce3da"/>
<path d="M746.7,147.7 743.8,146.3 741.6,148.7 742.7,150.8 746.1,150.3Z" fill="#fde5dc"/>
<path d="M766.1,159.0 762.9,158.9 761.6,160.4 762.3,162.4 765.1,162.8 766.8,159.5Z" fill="#fbcdbd"/>
<path d="M768.2,154.9 765.7,155.5 766.1,159.0 766.8,159.5 767.5,158.2 769.5,156.7Z" fill="#f9baa4"/>
<path d="M758.5,155.7 758.6,155.3 753.9,154.0 752.9,156.8 754.9,158.7Z" fill="#fbc7b6"/>
<path d="M750.8,157.2 749.2,155.1 747.1,155.7 746.9,158.8 747.5,159.0Z" fill="#fbcaba"/>
<path d="M729.2,155.9 725.3,156.3 725.4,160.2 726.0,160.4 729.3,158.3Z" fill="#fbccbc"/>
<path d="M759.4,159.9 758.5,155.7 754.9,158.7 755.0,159.5Z" fill="#fde5dd"/>
<path d="M724.1,160.8 720.4,161.5 720.1,164.0 722.7,163.8 723.4,163.7Z" fill="#fbcfc0"/>
<path d="M740.1,148.3 741.6,148.7 743.8,146.3 743.6,145.5 740.9,144.4 740.0,145.0Z" fill="#fcd5c7"/>
<path d="M739.7,155.0 740.7,153.6 737.5,149.1 736.6,149.1 738.0,152.5 738.0,154.9Z" fill="#fbc8b8"/>
<path d="M750.9,151.7 753.7,153.5 756.1,150.5 755.4,149.1 752.9,148.3 751.2,149.7Z" fill="#fce0d5"/>
<path d="M759.9,149.1 761.0,149.8 763.7,147.9 763.9,146.8 762.6,145.9 759.2,146.8Z" fill="#fdeeea"/>
<path d="M744.5,143.4 745.8,143.1 746.9,141.4 745.0,140.8 743.4,142.2Z" fill="#f8b29a"/>
<path d="M746.1,150.3 742.7,150.8 742.0,152.9 744.9,154.6 745.3,154.5 747.0,151.7Z" fill="#fbc8b7"/>
<path d="M710.3,160.2 710.4,157.7 708.8,156.9 709.1,161.5Z" fill="#fdefea"/>
<path d="M753.9,139.8 752.7,142.2 753.4,144.6 755.1,144.5 756.6,141.4Z" fill="#fdece6"/>
<path d="M723.4,163.7 727.8,163.3 726.0,160.4 725.4,160.2 724.6,160.3 724.1,160.8Z" fill="#fcd7ca"/>
<path d="M745.8,143.1 748.4,145.8 749.5,145.0 749.5,142.2 746.9,141.4Z" fill="#fbd2c3"/>
<path d="M761.3,164.7 758.3,164.7 758.3,167.7 760.3,166.8 762.0,165.9Z" fill="#fdece6"/>
<path d="M750.7,163.5 751.1,164.8 754.7,165.4 753.4,161.6 751.4,161.7Z" fill="#fdece7"/>
<path d="M729.6,163.2 730.3,163.1 732.8,166.7 733.7,162.3 731.2,161.4Z" fill="#fce0d6"/>
<path d="M744.0,156.8 742.5,157.3 742.5,159.9 744.5,160.6 746.0,159.0Z" fill="#fdf0eb"/>
<path d="M752.9,148.3 752.7,145.3 749.5,145.0 748.4,145.8 748.0,146.9 751.2,149.7Z" fill="#fce3d9"/>
<path d="M736.5,162.6 735.0,161.7 733.7,162.3 732.8,166.7 732.9,166.8 735.8,167.4Z" fill="#fbcebf"/>
<path d="M760.1,153.5 764.1,153.5 764.4,152.7 764.1,151.9 761.2,150.5Z" fill="#fbccbc"/>
<path d="M745.0,162.6 745.3,165.6 746.4,166.1 747.3,165.9 748.3,163.8 747.4,162.5Z" fill="#fbcebf"/>
<path d="M759.7,142.4 757.3,141.3 756.6,141.4 755.1,144.5 757.4,146.2 758.3,146.2Z" fill="#fcdfd4"/>
<path d="M740.6,163.8 740.6,163.8 741.3,160.6 739.2,159.0 738.4,159.3 737.8,162.4Z" fill="#fce1d7"/>
<path d="M762.3,162.4 761.3,164.7 762.0,165.9 764.1,164.7 765.1,162.8Z" fill="#fbd3c5"/>
<path d="M771.5,149.3 770.9,152.5 772.7,153.7 773.0,150.6 772.6,148.6Z" fill="#fcddd2"/>
<path d="M761.2,150.5 764.1,151.9 764.8,149.7 763.7,147.9 761.0,149.8Z" fill="#fde5dc"/>
<path d="M746.1,169.5 748.3,170.0 749.6,167.1 747.3,165.9 746.4,166.1Z" fill="#fdede7"/>
<path d="M764.8,149.7 764.1,151.9 764.4,152.7 768.1,152.1 767.9,149.6Z" fill="#fdede8"/>
<path d="M737.5,149.1 740.1,148.3 740.0,145.0 736.3,148.1 736.6,149.1Z" fill="#fbcaba"/>
<path d="M759.2,146.8 762.6,145.9 762.1,143.5 760.4,142.1 759.7,142.4 758.3,146.2Z" fill="#fdede8"/>
<path d="M754.7,165.4 754.7,165.4 751.1,164.8 750.3,166.9 751.6,168.0 754.5,167.3Z" fill="#fde4db"/>
<path d="M710.3,160.2 712.8,159.9 713.2,158.9 710.4,157.7Z" fill="#fce3da"/>
<path d="M739.2,159.0 740.1,156.1 739.7,155.0 738.0,154.9 738.0,156.9 734.8,156.3 734.7,157.8 735.1,158.5 738.4,159.3Z" fill="#fde8e0"/>
<path d="M743.0,166.3 740.6,163.9 737.4,167.8 742.4,168.8Z" fill="#f8b097"/>
<path d="M759.1,154.2 760.1,153.5 761.2,150.5 761.0,149.8 759.9,149.1 757.4,150.9Z" fill="#fbd0c1"/>
<path d="M754.5,167.3 751.6,168.0 751.5,170.3 755.5,168.8Z" fill="#fdece6"/>
<path d="M743.4,142.2 741.8,143.7 740.9,144.4 743.6,145.5 744.5,143.4Z" fill="#fcdbce"/>
<path d="M758.8,155.1 762.5,156.8 764.3,154.6 764.1,153.5 760.1,153.5 759.1,154.2Z" fill="#fce3da"/>
<path d="M748.3,160.6 747.4,162.5 748.3,163.8 750.7,163.5 751.4,161.7 751.2,161.5Z" fill="#fbcebf"/>
<path d="M740.6,163.9 740.6,163.8 737.8,162.4 736.5,162.6 735.8,167.4 737.4,167.8Z" fill="#fbc7b6"/>
<path d="M754.7,160.6 757.5,163.2 759.5,160.0 759.4,159.9 755.0,159.5Z" fill="#fbccbc"/>
<path d="M764.4,142.7 766.1,144.1 767.4,143.5 768.2,142.2 764.4,141.2Z" fill="#f7a489"/>
<path d="M754.9,158.7 752.9,156.8 751.1,157.3 751.2,161.5 751.4,161.7 753.4,161.6 754.7,160.6 755.0,159.5Z" fill="#fce1d8"/>
<path d="M716.3,161.2 719.7,160.5 720.0,157.0 716.2,158.6Z" fill="#f8af96"/>
</g>
<path d="M743.0,177.8 741.3,173.0 743.9,169.1 732.9,166.8 730.3,163.1 722.7,163.8 716.4,164.4 716.4,168.7 713.4,172.4 706.7,169.3 704.1,177.2 699.1,170.5 694.9,176.0 687.7,176.6 688.1,182.1 684.3,186.3 687.2,191.0 686.4,195.2 692.7,197.5 691.5,201.7 692.3,202.2 695.0,200.0 697.5,196.7 702.5,195.0 708.3,197.5 713.3,201.7 715.8,206.7 718.3,211.7 723.3,218.3 723.3,218.0 731.7,224.7 738.3,230.5 745.0,235.5 751.7,238.8 755.8,243.0 760.8,246.3 762.5,253.0 765.0,258.0 763.3,263.0 760.0,266.3 760.8,268.0 764.2,267.2 767.5,261.3 770.8,257.2 772.5,253.0 770.0,249.7 767.5,246.3 768.3,243.0 773.3,240.5 776.7,239.7 780.0,243.0 782.5,246.3 783.3,243.0 780.0,237.2 775.0,233.8 770.0,231.3 765.0,229.7 763.3,225.5 764.2,223.0 758.3,223.8 755.0,221.3 752.5,219.3 746.7,215.0 744.2,210.0 741.7,204.2 736.7,198.3 733.3,195.0 731.7,190.0 733.3,183.3 738.3,180.0 742.0,179.2 743.3,181.7 744.3,180.9 745.6,180.3ZM710.8,239.7 707.5,231.3 703.3,232.2 696.7,236.3 699.2,244.7 698.3,253.8 702.5,257.2 708.3,253.8 709.2,248.8ZM755.8,273.8 757.5,268.0 759.2,263.0 755.8,263.8 748.3,266.3 740.0,264.7 732.5,266.3 734.2,270.5 740.0,273.0 746.7,276.3 753.3,280.5 756.7,278.0Z" fill="#fbd5c8"/>
<g stroke="#fce4da" stroke-width="0.35">
<path d="M724.8,183.0 725.9,179.5 725.8,179.3 719.8,176.7 716.0,180.6 715.7,182.6 717.4,183.3Z" fill="#fce3da"/>
<path d="M707.4,176.1 707.0,175.8 700.7,179.6 700.5,182.6 701.5,184.9 707.7,183.5 708.6,182.6Z" fill="#f9c0ab"/>
<path d="M724.3,204.5 720.5,202.0 718.1,204.1 720.5,210.3 722.8,210.1Z" fill="#fbcbbb"/>
<path d="M725.8,179.3 725.9,179.5 730.9,180.1 733.6,178.7 734.2,176.6 730.2,173.1 727.2,174.6Z" fill="#fdebe5"/>
<path d="M738.1,214.2 735.4,217.0 735.7,220.1 738.3,221.1 742.6,218.5 742.9,217.6 742.7,216.6 738.8,214.1Z" fill="#fdede7"/>
<path d="M734.7,210.5 732.6,210.4 730.1,214.9 730.1,215.1 735.4,217.0 738.1,214.2Z" fill="#fde8e1"/>
<path d="M720.9,188.5 717.4,183.3 715.7,182.6 715.7,182.6 713.5,190.6 717.7,193.2 720.1,191.9Z" fill="#f9c9b9"/>
<path d="M746.0,273.3 746.0,276.0 746.7,276.3 749.0,277.8 752.9,274.3 751.7,271.8Z" fill="#fcdfd4"/>
<path d="M727.0,204.0 729.4,207.6 731.1,208.2 734.4,203.0 733.0,200.9 728.1,202.2Z" fill="#fcdace"/>
<path d="M714.0,172.6 713.7,172.0 713.4,172.4 709.2,170.4 706.7,174.8 707.0,175.8 707.4,176.1 712.1,175.8Z" fill="#fec5b0"/>
<path d="M715.7,182.6 708.6,182.6 707.7,183.5 710.1,190.0 711.7,191.0 713.5,190.6Z" fill="#fde8e1"/>
<path d="M751.7,269.6 749.6,267.0 742.8,270.5 746.0,273.3 751.7,271.8Z" fill="#f8ab90"/>
<path d="M728.1,202.2 733.0,200.9 734.0,195.6 733.3,195.0 732.9,193.8 726.1,198.0Z" fill="#fdcdbd"/>
<path d="M690.1,187.2 688.4,192.9 693.3,193.6 695.5,188.6 692.4,186.6Z" fill="#fde7e0"/>
<path d="M744.3,223.2 746.0,224.1 750.1,219.5 750.2,219.2 742.9,217.6 742.6,218.5Z" fill="#fdf2ee"/>
<path d="M757.2,223.3 758.2,225.6 763.9,226.9 763.3,225.5 764.2,223.0 758.3,223.8 757.3,223.1Z" fill="#f4bba6"/>
<path d="M768.0,243.1 763.4,243.9 763.7,248.6 767.3,250.2 770.0,249.7 770.0,249.7 767.5,246.3 768.3,243.3Z" fill="#f4bba6"/>
<path d="M717.4,164.3 716.4,164.4 716.4,168.7 713.7,172.0 714.0,172.6 718.6,172.8Z" fill="#fcdace"/>
<path d="M705.5,241.1 704.4,241.7 702.0,245.5 704.5,249.4 709.4,247.7 709.6,246.2Z" fill="#f4bba6"/>
<path d="M752.9,274.3 749.0,277.8 753.3,280.5 756.7,278.0 756.3,276.1Z" fill="#fbc8b7"/>
<path d="M745.0,234.8 744.6,235.2 745.0,235.5 750.7,238.3 752.1,233.9Z" fill="#fcd6c9"/>
<path d="M745.0,234.8 746.0,228.9 741.4,229.0 739.6,231.5 744.6,235.2Z" fill="#fac6b4"/>
<path d="M730.2,173.1 734.2,176.6 736.2,175.4 736.2,170.8 731.3,167.5Z" fill="#fcded3"/>
<path d="M750.4,228.3 752.7,231.3 757.1,229.5 758.2,225.6 757.2,223.3 752.3,224.9Z" fill="#fcded3"/>
<path d="M733.6,178.7 730.9,180.1 731.4,184.7 732.8,185.4 733.3,183.3 736.0,181.6Z" fill="#fcd5c7"/>
<path d="M693.5,181.9 692.5,180.3 692.0,180.1 688.0,181.0 688.1,182.1 685.9,184.5 690.1,187.2 692.4,186.6Z" fill="#ffe8df"/>
<path d="M693.1,198.4 694.1,194.6 693.3,193.6 688.4,192.9 686.6,194.0 686.4,195.2 692.7,197.5 692.4,198.5Z" fill="#ffe4d9"/>
<path d="M749.6,267.0 751.7,269.6 756.7,267.4 757.4,263.4 755.8,263.8 749.5,266.0Z" fill="#fcd4c6"/>
<path d="M738.3,221.1 739.2,224.9 740.3,225.4 744.3,223.2 742.6,218.5Z" fill="#fff6f2"/>
<path d="M719.8,176.7 719.5,173.4 718.6,172.8 714.0,172.6 712.1,175.8 716.0,180.6Z" fill="#fde4db"/>
<path d="M731.4,184.7 727.0,186.6 728.1,190.6 732.8,193.3 731.7,190.0 732.8,185.4Z" fill="#fbcbbb"/>
<path d="M767.3,250.2 763.6,255.1 764.6,257.2 770.5,257.5 770.8,257.2 772.5,253.0 770.0,249.7Z" fill="#fcc3ae"/>
<path d="M738.8,214.1 742.7,216.6 745.7,213.0 744.2,210.1 740.9,209.8Z" fill="#fbc8b7"/>
<path d="M703.1,235.6 706.0,240.4 710.1,237.8 707.5,231.3 706.6,231.5Z" fill="#f4bba6"/>
<path d="M699.1,245.6 698.3,253.8 698.6,254.1 703.9,251.5 704.5,249.4 702.0,245.5Z" fill="#fabfab"/>
<path d="M720.5,210.3 718.1,204.1 714.8,204.6 715.8,206.7 718.3,211.7 718.5,211.8Z" fill="#faefeb"/>
<path d="M730.1,214.9 726.0,214.1 723.1,218.0 723.3,218.3 723.3,218.0 729.4,222.9 730.1,215.1Z" fill="#fff5f1"/>
<path d="M706.0,240.4 705.5,241.1 709.6,246.2 710.8,239.7 710.1,237.8Z" fill="#f9c0ab"/>
<path d="M723.8,170.1 721.5,163.9 717.4,164.3 718.6,172.8 719.5,173.4 723.5,171.2Z" fill="#fbcdbe"/>
<path d="M742.8,270.5 741.3,270.3 740.8,270.4 739.3,272.7 740.0,273.0 746.0,276.0 746.0,273.3Z" fill="#fdebe5"/>
<path d="M773.6,238.0 775.5,234.2 775.0,233.8 770.4,231.5 768.4,233.6 768.6,237.1Z" fill="#fac4b1"/>
<path d="M740.8,270.4 736.9,265.4 732.5,266.3 734.2,270.5 739.3,272.7Z" fill="#fdeae4"/>
<path d="M731.4,164.7 730.3,163.1 722.7,163.8 721.5,163.9 723.8,170.1 731.2,167.4Z" fill="#fbcbbb"/>
<path d="M728.1,190.6 727.0,186.6 725.5,185.4 720.9,188.5 720.1,191.9 723.8,192.7Z" fill="#fdcdbd"/>
<path d="M715.7,182.6 716.0,180.6 712.1,175.8 707.4,176.1 708.6,182.6 715.7,182.6Z" fill="#fbc2ad"/>
<path d="M698.6,254.1 702.5,257.2 706.9,254.6 703.9,251.5Z" fill="#fde8e1"/>
<path d="M758.2,225.6 757.1,229.5 762.0,232.3 762.7,231.8 764.1,227.4 763.9,226.9Z" fill="#f5bca7"/>
<path d="M768.4,233.6 770.4,231.5 770.0,231.3 765.0,229.7 764.1,227.4 762.7,231.8Z" fill="#fbd0c1"/>
<path d="M720.5,199.9 717.7,196.3 711.6,200.2 713.3,201.7 714.8,204.6 718.1,204.1 720.5,202.0Z" fill="#facaba"/>
<path d="M773.6,238.0 768.6,237.1 767.7,238.2 768.0,243.1 768.3,243.3 768.3,243.0 773.3,240.5 774.5,240.2Z" fill="#fde4db"/>
<path d="M724.8,183.0 717.4,183.3 720.9,188.5 725.5,185.4Z" fill="#fcdbcf"/>
<path d="M730.9,180.1 725.9,179.5 724.8,183.0 725.5,185.4 727.0,186.6 731.4,184.7Z" fill="#fdf0ec"/>
<path d="M701.4,185.3 701.5,184.9 700.5,182.6 693.5,181.9 692.4,186.6 695.5,188.6 697.7,188.4Z" fill="#fde3da"/>
<path d="M760.3,237.5 762.0,232.3 757.1,229.5 752.7,231.3 752.5,233.4 758.6,237.9Z" fill="#fac3b0"/>
<path d="M746.0,224.1 747.7,227.7 750.4,228.3 752.3,224.9 750.1,219.5Z" fill="#fbd2c3"/>
<path d="M730.1,215.1 729.4,222.9 730.7,223.9 735.7,220.1 735.4,217.0Z" fill="#fac6b5"/>
<path d="M725.1,197.7 720.5,199.9 720.5,202.0 724.3,204.5 727.0,204.0 728.1,202.2 726.1,198.0Z" fill="#ffd0c0"/>
<path d="M749.6,267.0 749.5,266.0 748.3,266.3 743.5,265.4 741.3,270.3 742.8,270.5Z" fill="#fbcbbb"/>
<path d="M757.7,239.1 758.6,237.9 752.5,233.4 752.1,233.9 750.7,238.3 751.7,238.8 753.7,240.8Z" fill="#fdece6"/>
<path d="M692.0,180.1 690.5,176.4 687.7,176.6 688.0,181.0Z" fill="#fbf0ec"/>
<path d="M733.0,200.9 734.4,203.0 737.2,204.2 739.5,201.7 736.7,198.3 734.0,195.6Z" fill="#fce1d7"/>
<path d="M732.9,193.8 732.8,193.3 728.1,190.6 723.8,192.7 725.1,197.7 726.1,198.0Z" fill="#fbcbbb"/>
<path d="M704.5,190.3 701.4,185.3 697.7,188.4 700.0,195.6 700.2,195.8 702.5,195.0 703.0,195.2Z" fill="#f8ab92"/>
<path d="M724.7,211.3 726.0,214.1 730.1,214.9 732.6,210.4 731.1,208.2 729.4,207.6Z" fill="#f69f83"/>
<path d="M697.1,237.9 699.2,244.7 699.1,245.6 702.0,245.5 704.4,241.7Z" fill="#f6bda8"/>
<path d="M704.5,249.4 703.9,251.5 706.9,254.6 708.3,253.8 709.2,248.8 709.4,247.7Z" fill="#fcdbcf"/>
<path d="M703.1,235.6 706.6,231.5 703.3,232.2 698.4,235.3Z" fill="#f6bda8"/>
<path d="M723.5,171.2 719.5,173.4 719.8,176.7 725.8,179.3 727.2,174.6Z" fill="#fcd4c6"/>
<path d="M717.7,196.3 717.7,193.2 713.5,190.6 711.7,191.0 708.4,197.5 711.6,200.2Z" fill="#facaba"/>
<path d="M731.1,208.2 732.6,210.4 734.7,210.5 738.3,206.5 737.2,204.2 734.4,203.0Z" fill="#fde4db"/>
<path d="M776.9,239.9 780.0,243.0 782.5,246.3 783.3,243.0 780.5,238.1Z" fill="#fac6b4"/>
<path d="M740.3,225.4 741.4,229.0 746.0,228.9 747.7,227.7 746.0,224.1 744.3,223.2Z" fill="#fef3ef"/>
<path d="M774.5,240.2 776.7,239.7 776.9,239.9 780.5,238.1 780.0,237.2 775.5,234.2 773.6,238.0Z" fill="#fbcbbb"/>
<path d="M730.2,173.1 731.3,167.5 731.2,167.4 723.8,170.1 723.5,171.2 727.2,174.6Z" fill="#f7a58a"/>
<path d="M768.6,237.1 768.4,233.6 762.7,231.8 762.0,232.3 760.3,237.5 760.6,237.7 767.7,238.2Z" fill="#fef3ef"/>
<path d="M760.3,237.5 758.6,237.9 757.7,239.1 757.6,244.2 759.2,245.3 763.2,243.7 760.6,237.7Z" fill="#fac2af"/>
<path d="M711.7,191.0 710.1,190.0 704.5,190.3 703.0,195.2 708.3,197.5 708.4,197.5Z" fill="#fbd0c1"/>
<path d="M693.1,198.4 692.4,198.5 691.5,201.7 692.3,202.2 694.8,200.2Z" fill="#fbcebf"/>
<path d="M739.2,224.9 738.3,221.1 735.7,220.1 730.7,223.9 731.7,224.7 734.4,227.1Z" fill="#fde6de"/>
<path d="M697.3,174.8 692.5,180.3 693.5,181.9 700.5,182.6 700.7,179.6Z" fill="#fff8f4"/>
<path d="M707.7,183.5 701.5,184.9 701.4,185.3 704.5,190.3 710.1,190.0Z" fill="#fbcdbd"/>
<path d="M700.0,195.6 694.1,194.6 693.1,198.4 694.8,200.2 695.0,200.0 697.5,196.7 700.2,195.8Z" fill="#fde0d5"/>
<path d="M756.7,267.4 751.7,269.6 751.7,271.8 752.9,274.3 756.3,276.1 755.8,273.8 757.5,268.1Z" fill="#fac5b3"/>
<path d="M739.1,206.9 738.3,206.5 734.7,210.5 738.1,214.2 738.8,214.1 740.9,209.8Z" fill="#fbcfbf"/>
<path d="M767.3,250.2 763.7,248.6 761.6,249.5 762.5,253.0 763.6,255.1Z" fill="#fac1ac"/>
<path d="M737.2,204.2 738.3,206.5 739.1,206.9 742.3,205.6 741.7,204.2 739.5,201.7Z" fill="#fbcdbd"/>
<path d="M736.2,170.8 736.2,175.4 741.5,176.3 742.3,175.6 741.3,173.0 743.9,169.1 741.2,168.5Z" fill="#fde7df"/>
<path d="M742.7,216.6 742.9,217.6 750.2,219.2 751.0,218.2 746.7,215.0 745.7,213.0Z" fill="#fcddd1"/>
<path d="M740.8,270.4 741.3,270.3 743.5,265.4 740.0,264.7 736.9,265.4Z" fill="#fcd5c7"/>
<path d="M759.2,245.3 760.8,246.3 761.6,249.5 763.7,248.6 763.4,243.9 763.2,243.7Z" fill="#f9c0ab"/>
<path d="M724.7,211.3 729.4,207.6 727.0,204.0 724.3,204.5 722.8,210.1Z" fill="#fbf0ec"/>
<path d="M726.0,214.1 724.7,211.3 722.8,210.1 720.5,210.3 718.5,211.8 723.1,218.0Z" fill="#fbf0ec"/>
<path d="M741.5,176.3 736.2,175.4 734.2,176.6 733.6,178.7 736.0,181.6 738.3,180.0 741.2,179.4Z" fill="#fde6de"/>
<path d="M765.1,265.5 767.5,261.3 770.5,257.5 764.6,257.2 765.0,258.0 763.3,263.0 763.1,263.2Z" fill="#fac4b2"/>
<path d="M736.2,170.8 741.2,168.5 732.9,166.8 731.4,164.7 731.2,167.4 731.3,167.5Z" fill="#fcd6c9"/>
<path d="M706.7,174.8 705.3,173.6 704.1,177.2 699.1,170.5 697.1,173.1 697.3,174.8 700.7,179.6 707.0,175.8Z" fill="#f4bba6"/>
<path d="M741.4,229.0 740.3,225.4 739.2,224.9 734.4,227.1 738.3,230.5 739.6,231.5Z" fill="#fff4f0"/>
<path d="M739.1,206.9 740.9,209.8 744.2,210.1 744.2,210.0 742.3,205.6Z" fill="#fce0d5"/>
<path d="M697.7,188.4 695.5,188.6 693.3,193.6 694.1,194.6 700.0,195.6Z" fill="#ffe5da"/>
<path d="M697.3,174.8 697.1,173.1 694.9,176.0 690.5,176.4 692.0,180.1 692.5,180.3Z" fill="#fbf0ec"/>
<path d="M723.8,192.7 720.1,191.9 717.7,193.2 717.7,196.3 720.5,199.9 725.1,197.7Z" fill="#ffd0c0"/>
<path d="M760.6,237.7 763.2,243.7 763.4,243.9 768.0,243.1 767.7,238.2Z" fill="#fcf1ed"/>
<path d="M741.5,176.3 741.2,179.4 742.0,179.2 743.3,181.7 744.3,180.9 745.6,180.3 743.0,177.8 742.3,175.6Z" fill="#fbcdbe"/>
<path d="M756.7,267.4 757.5,268.1 757.5,268.0 759.2,263.0 757.4,263.4ZM763.1,263.2 760.0,266.3 760.8,268.0 764.2,267.2 765.1,265.5Z" fill="#fac3b0"/>
<path d="M706.0,240.4 703.1,235.6 698.4,235.3 696.7,236.3 697.1,237.9 704.4,241.7 705.5,241.1Z" fill="#fac1ac"/>
<path d="M685.9,184.5 684.3,186.3 687.2,191.0 686.6,194.0 688.4,192.9 690.1,187.2Z" fill="#fcd7c9"/>
<path d="M757.7,239.1 753.7,240.8 755.8,243.0 757.6,244.2Z" fill="#fac5b3"/>
<path d="M706.7,174.8 709.2,170.4 706.7,169.3 705.3,173.6Z" fill="#fcc3ae"/>
<path d="M747.7,227.7 746.0,228.9 745.0,234.8 752.1,233.9 752.5,233.4 752.7,231.3 750.4,228.3Z" fill="#fbd2c4"/>
<path d="M752.3,224.9 757.2,223.3 757.3,223.1 755.0,221.3 752.5,219.3 751.0,218.2 750.2,219.2 750.1,219.5Z" fill="#fbccbd"/>
</g>
<path d="M701.7,215.8 706.7,213.3 708.0,211.7 708.7,218.3 707.5,223.3 705.3,230.0 702.5,226.7 700.8,221.7Z" fill="#fbd5c8"/>
<g stroke="#fce4da" stroke-width="0.3">
<path d="M716.7,169.2 721.7,169.2 725.0,170.8 730.0,170.0 732.5,167.5 736.7,166.7 735.8,163.3 730.0,162.5 723.3,163.3 720.0,165.0 715.8,165.8Z" fill="#8f1a2b"/>
<path d="M745.3,167.5 745.7,163.3 744.7,159.7 742.0,156.7 738.0,157.5 737.7,161.7 737.3,166.0 733.8,167.7 733.3,171.0 737.7,171.7 737.3,174.2 738.3,179.3 741.3,179.3 742.0,179.2 742.0,179.2 742.7,176.8 741.3,173.0 743.0,170.4 743.0,170.0 743.8,169.1 743.9,169.1 743.9,169.1Z" fill="#f26a4f"/>
<path d="M733.3,176.7 737.2,177.5 736.7,170.8 732.7,170.8Z" fill="#8f1a2b"/>
<path d="M741.7,162.7 744.7,162.7 744.7,160.0 741.7,160.0Z" fill="#c0392b"/>
<path d="M762.5,164.2 762.7,165.6 764.1,164.7 764.6,163.9Z" fill="#c43c3c"/>
<path d="M675.8,208.3 675.8,204.2 670.0,202.5 665.0,200.8 665.8,205.7 666.7,205.8 671.3,207.6Z" fill="#cf3a3a"/>
<path d="M685.8,205.0 681.7,202.5 675.8,204.2 675.8,208.3 680.0,210.0 685.0,206.7 685.5,206.4Z" fill="#ee5a45"/>
<path d="M693.3,200.0 690.0,198.3 685.0,196.7 685.8,202.5 690.0,204.2 691.5,202.3 691.5,201.7 691.8,201.9Z" fill="#d63c3c"/>
<path d="M678.3,195.8 683.3,193.3 686.7,189.2 680.8,186.7 675.8,190.0Z" fill="#f26a4f"/>
<path d="M732.5,212.5 738.3,214.2 740.0,210.0 735.8,204.2 730.0,205.8Z" fill="#f58a6a"/>
<path d="M670.0,140.0 672.5,145.0 676.7,143.3 675.8,132.5 670.8,133.3Z" fill="#ee6352"/>
<path d="M636.7,167.5 642.5,170.0 646.7,167.5 645.0,161.7 639.2,160.8Z" fill="#ee6352"/>
<path d="M630.0,130.8 636.7,132.5 643.3,130.0 642.5,123.3 636.7,125.0Z" fill="#f58a6a"/>
<path d="M612.5,129.2 613.3,134.2 615.8,141.7 620.0,143.3 619.7,134.2 617.5,130.0Z" fill="#f7a78c"/>
<path d="M588.3,145.8 591.7,150.0 593.3,153.3 600.0,153.3 606.7,155.8 611.3,153.3 610.8,143.3 606.7,141.7 600.0,140.0 593.3,143.3Z" fill="#fdeee8"/>
<path d="M663.3,171.7 670.0,171.7 676.7,170.0 685.0,165.0 686.7,157.5 676.7,161.7 666.7,162.5 661.7,166.7Z" fill="#f58a6a"/>
<path d="M689.0,131.5 688.7,130.1 687.0,130.1 686.8,131.7 688.0,132.5Z" fill="#e8573f"/>
<path d="M652.3,111.2 650.7,111.3 650.9,112.9 652.1,113.4 653.1,112.4Z" fill="#8f1a2b"/>
<path d="M671.1,99.7 670.8,101.1 672.6,101.5 674.2,100.9 673.4,99.8Z" fill="#e05a48"/>
<path d="M675.7,108.2 677.9,108.6 679.3,106.4 678.3,104.0 676.2,103.3 674.8,105.6Z" fill="#f48c6e"/>
<path d="M679.6,104.2 678.1,104.3 678.0,108.5 679.1,110.0 680.1,107.7Z" fill="#d84a3e"/>
<path d="M684.4,92.3 681.6,92.7 681.5,95.0 684.3,95.8 687.0,95.1 686.7,93.0Z" fill="#f59a7e"/>
<path d="M680.8,83.6 678.8,82.2 675.6,82.2 675.1,84.4 676.8,86.3 679.9,85.5Z" fill="#f59a7e"/>
<path d="M687.2,85.4 688.2,83.1 687.0,81.3 685.4,82.2 685.6,84.7Z" fill="#f0785c"/>
<path d="M669.0,87.9 668.0,91.1 668.5,95.0 670.4,94.9 670.6,90.0Z" fill="#f59a7e"/>
<path d="M719.3,117.2 717.7,119.1 717.8,122.3 720.1,122.4 721.0,119.4Z" fill="#b5202a"/>
<path d="M716.5,92.5 719.1,93.6 720.2,89.9 718.2,88.0 716.1,89.2Z" fill="#f0785c"/>
<path d="M708.3,73.1 708.4,76.1 711.0,76.5 712.2,74.6 711.1,72.6Z" fill="#f9b9a3"/>
<path d="M776.7,238.8 773.3,236.7 769.2,237.2 770.0,239.7 773.7,240.4 776.7,239.7 777.1,240.1Z" fill="#ee5a45"/>
<path d="M749.2,266.3 753.3,268.0 757.5,268.0 759.2,263.0 755.8,263.8Z" fill="#ee5a45"/>
</g>
</svg>
<div class="abs" style="left:5px;top:4.3px;width:42.3px;height:23.8px;background:#323232;"></div>
<div class="abs" style="left:28.3px;top:4.3px;width:1px;height:23.8px;background:#3d3d3d;"></div>
<svg class="abs" style="left:10.3px;top:10px" width="14" height="12" viewBox="0 0 14 12"><path d="M0.8 1.8 L0.8 9.6 L2.8 7.8 L4.1 10.9 L5.4 10.3 L4.1 7.4 L6.6 7.2 Z" fill="none" stroke="#cfcfcf" stroke-width="0.9"/><path d="M5 0.8 H12.4 V7.8 H7.2" fill="none" stroke="#cfcfcf" stroke-width="0.9"/><path d="M7.2 2.2 L9.2 3.6 L10.6 2 L10.8 6 L8 6.2 Z" fill="#9a9a9a"/></svg>
<svg class="abs" style="left:33.2px;top:14.4px" width="11" height="8" viewBox="0 0 11 8"><path d="M0.9 0.8 H10.1 L5.5 5.9 Z" fill="none" stroke="#c8c8c8" stroke-width="1"/></svg>
<div class="abs" style="left:563px;top:4.5px;width:50.2px;height:25.5px;background:#323232;"></div>
<svg class="abs" style="left:569px;top:9.5px" width="15" height="15" viewBox="0 0 15 15"><circle cx="5.6" cy="5.6" r="4" fill="none" stroke="#d2d2d2" stroke-width="1.3"/><path d="M8.6 8.6 L13 13" stroke="#d2d2d2" stroke-width="1.5"/></svg>
<svg class="abs" style="left:595.5px;top:10.5px" width="10" height="14" viewBox="0 0 10 14"><path d="M1.5 1 H8.5 V12.5 L5 9.6 L1.5 12.5 Z" fill="none" stroke="#bdbdbd" stroke-width="1"/></svg>
<div class="abs" style="left:591.3px;top:214px;width:22.4px;height:42.8px;background:#323232;"></div>
<svg class="abs" style="left:591.3px;top:214px" width="22.4" height="42.8" viewBox="0 0 22.4 42.8"><path d="M6.8 10.8h9M11.3 6.3v9M6.8 30.5h9" stroke="#d2d2d2" stroke-width="1.2" fill="none"/></svg>
<div class="abs" style="left:495.5px;top:262px;width:116.5px;height:9.6px;background:rgba(244,244,244,0.82);"></div>
<div class="t" style="left:498.8px;top:261.6px;font-size:9.6px;line-height:10.5px;color:#555;">Esri, Garmin, FAO, NOAA</div>
</div>
<div class="panel" style="left:988.4px;top:31.7px;width:138.6px;height:275.3px;">
<div class="t" style="left:6.6px;top:8.5px;font-size:9.95px;line-height:12px;font-weight:bold;color:#e6e6e6;">Daily Incidence</div>
<div class="t" style="left:6.6px;top:33.5px;font-size:10.66px;line-height:15px;color:#cdcdcd;">Daily Average (per<br>100.000)</div>
<svg class="abs" style="left:9.1px;top:68.20px" width="16" height="16" viewBox="0 0 16 16"><path d="M0.3 0.3 L15.3 7 L15.3 15 L0.3 15 Z" fill="#7f0711"/></svg>
<div class="t" style="left:32.1px;top:70.50px;font-size:10.7px;line-height:12px;color:#cdcdcd;">&gt; 70</div>
<svg class="abs" style="left:9.1px;top:90.63px" width="16" height="16" viewBox="0 0 16 16"><path d="M0.3 0.3 L15.3 7 L15.3 15 L0.3 15 Z" fill="#a81b1f"/></svg>
<div class="t" style="left:32.1px;top:92.93px;font-size:10.7px;line-height:12px;color:#cdcdcd;">&gt; 60 - 70</div>
<svg class="abs" style="left:9.1px;top:113.06px" width="16" height="16" viewBox="0 0 16 16"><path d="M0.3 0.3 L15.3 7 L15.3 15 L0.3 15 Z" fill="#cf392c"/></svg>
<div class="t" style="left:32.1px;top:115.36px;font-size:10.7px;line-height:12px;color:#cdcdcd;">&gt; 50 - 60</div>
<svg class="abs" style="left:9.1px;top:135.49px" width="16" height="16" viewBox="0 0 16 16"><path d="M0.3 0.3 L15.3 7 L15.3 15 L0.3 15 Z" fill="#dd5f45"/></svg>
<div class="t" style="left:32.1px;top:137.79px;font-size:10.7px;line-height:12px;color:#cdcdcd;">&gt; 40 - 50</div>
<svg class="abs" style="left:9.1px;top:157.92px" width="16" height="16" viewBox="0 0 16 16"><path d="M0.3 0.3 L15.3 7 L15.3 15 L0.3 15 Z" fill="#dc8268"/></svg>
<div class="t" style="left:32.1px;top:160.22px;font-size:10.7px;line-height:12px;color:#cdcdcd;">&gt; 30 - 40</div>
<svg class="abs" style="left:9.1px;top:180.35px" width="16" height="16" viewBox="0 0 16 16"><path d="M0.3 0.3 L15.3 7 L15.3 15 L0.3 15 Z" fill="#dba18d"/></svg>
<div class="t" style="left:32.1px;top:182.65px;font-size:10.7px;line-height:12px;color:#cdcdcd;">&gt; 20 - 30</div>
<svg class="abs" style="left:9.1px;top:202.78px" width="16" height="16" viewBox="0 0 16 16"><path d="M0.3 0.3 L15.3 7 L15.3 15 L0.3 15 Z" fill="#dbbdb2"/></svg>
<div class="t" style="left:32.1px;top:205.08px;font-size:10.7px;line-height:12px;color:#cdcdcd;">&gt; 10 - 20</div>
<svg class="abs" style="left:9.1px;top:225.21px" width="16" height="16" viewBox="0 0 16 16"><path d="M0.3 0.3 L15.3 7 L15.3 15 L0.3 15 Z" fill="#dccfcc"/></svg>
<div class="t" style="left:32.1px;top:227.51px;font-size:10.7px;line-height:12px;color:#cdcdcd;">0 - 10</div>
</div>
<svg class="abs" style="left:1119.3px;top:27.1px" width="15" height="15" viewBox="0 0 15 15"><circle cx="7.5" cy="7.5" r="6.5" fill="#2b2b2b" stroke="#6a6a6a" stroke-width="0.9"/><path d="M4 4l2.3 0.6L4.6 6.3zM11 4l-0.6 2.3L8.7 4.6zM4 11l0.6-2.3L6.3 10.4zM11 11l-2.3-0.6L10.4 8.7z" fill="#b0b0b0"/></svg>
<div class="tab on" style="left:379.30px;top:307.00px;width:81.00px;">Daily Incidence</div>
<div class="tab" style="left:464.50px;top:307.00px;width:88.50px;">7 Days Incidence</div>
<div class="tab" style="left:556.60px;top:307.00px;width:42.40px;">Trend</div>
<div class="panel" style="left:369.30px;top:336.30px;width:758.5px;height:191.7px;">
<svg class="abs" style="left:0;top:0" width="758.5" height="191.7" viewBox="0 0 758.5 191.7" font-family='Liberation Sans, sans-serif'>
<text x="379.50" y="16.90" text-anchor="middle" font-size="11.3" font-weight="bold" fill="#e2e2e2">Daily Cases (Sum)</text>
<line x1="59.60" y1="122.50" x2="735.70" y2="122.50" stroke="#383838" stroke-width="1" stroke-dasharray="2 2.2"/>
<line x1="59.60" y1="94.70" x2="735.70" y2="94.70" stroke="#383838" stroke-width="1" stroke-dasharray="2 2.2"/>
<line x1="59.60" y1="66.90" x2="735.70" y2="66.90" stroke="#383838" stroke-width="1" stroke-dasharray="2 2.2"/>
<line x1="59.60" y1="39.10" x2="735.70" y2="39.10" stroke="#383838" stroke-width="1" stroke-dasharray="2 2.2"/>
<line x1="134.77" y1="39.10" x2="134.77" y2="150.30" stroke="#383838" stroke-width="1" stroke-dasharray="2 2.2"/>
<line x1="209.94" y1="39.10" x2="209.94" y2="150.30" stroke="#383838" stroke-width="1" stroke-dasharray="2 2.2"/>
<line x1="285.11" y1="39.10" x2="285.11" y2="150.30" stroke="#383838" stroke-width="1" stroke-dasharray="2 2.2"/>
<line x1="360.28" y1="39.10" x2="360.28" y2="150.30" stroke="#383838" stroke-width="1" stroke-dasharray="2 2.2"/>
<line x1="435.45" y1="39.10" x2="435.45" y2="150.30" stroke="#383838" stroke-width="1" stroke-dasharray="2 2.2"/>
<line x1="510.62" y1="39.10" x2="510.62" y2="150.30" stroke="#383838" stroke-width="1" stroke-dasharray="2 2.2"/>
<line x1="585.79" y1="39.10" x2="585.79" y2="150.30" stroke="#383838" stroke-width="1" stroke-dasharray="2 2.2"/>
<line x1="660.96" y1="39.10" x2="660.96" y2="150.30" stroke="#383838" stroke-width="1" stroke-dasharray="2 2.2"/>
<line x1="736.13" y1="39.10" x2="736.13" y2="150.30" stroke="#383838" stroke-width="1" stroke-dasharray="2 2.2"/>
<rect x="62.00" y="123.47" width="31.3" height="26.83" fill="#0286ae"/>
<text x="77.65" y="121.27" text-anchor="middle" font-size="8.2" fill="#c4c4c4">19.3k</text>
<rect x="99.60" y="117.91" width="31.3" height="32.39" fill="#0286ae"/>
<text x="115.25" y="115.71" text-anchor="middle" font-size="8.2" fill="#c4c4c4">23.3k</text>
<rect x="137.20" y="132.09" width="31.3" height="18.21" fill="#0286ae"/>
<text x="152.85" y="129.89" text-anchor="middle" font-size="8.2" fill="#c4c4c4">13.1k</text>
<rect x="174.80" y="103.32" width="31.3" height="46.98" fill="#0286ae"/>
<text x="190.45" y="101.12" text-anchor="middle" font-size="8.2" fill="#c4c4c4">33.8k</text>
<rect x="212.40" y="59.95" width="31.3" height="90.35" fill="#0286ae"/>
<text x="228.05" y="57.75" text-anchor="middle" font-size="8.2" fill="#c4c4c4">65k</text>
<rect x="250.00" y="52.86" width="31.3" height="97.44" fill="#0286ae"/>
<text x="265.65" y="50.66" text-anchor="middle" font-size="8.2" fill="#c4c4c4">70.1k</text>
<rect x="287.60" y="48.69" width="31.3" height="101.61" fill="#0286ae"/>
<text x="303.25" y="46.49" text-anchor="middle" font-size="8.2" fill="#c4c4c4">73.1k</text>
<rect x="325.20" y="51.05" width="31.3" height="99.25" fill="#0286ae"/>
<text x="340.85" y="48.85" text-anchor="middle" font-size="8.2" fill="#c4c4c4">71.4k</text>
<rect x="362.80" y="55.50" width="31.3" height="94.80" fill="#0286ae"/>
<text x="378.45" y="53.30" text-anchor="middle" font-size="8.2" fill="#c4c4c4">68.2k</text>
<rect x="400.40" y="78.16" width="31.3" height="72.14" fill="#0286ae"/>
<text x="416.05" y="75.96" text-anchor="middle" font-size="8.2" fill="#c4c4c4">51.9k</text>
<rect x="438.00" y="106.93" width="31.3" height="43.37" fill="#0286ae"/>
<text x="453.65" y="104.73" text-anchor="middle" font-size="8.2" fill="#c4c4c4">31.2k</text>
<rect x="475.60" y="69.12" width="31.3" height="81.18" fill="#0286ae"/>
<text x="491.25" y="66.92" text-anchor="middle" font-size="8.2" fill="#c4c4c4">58.4k</text>
<rect x="513.20" y="63.70" width="31.3" height="86.60" fill="#0286ae"/>
<text x="528.85" y="61.50" text-anchor="middle" font-size="8.2" fill="#c4c4c4">62.3k</text>
<rect x="550.80" y="56.34" width="31.3" height="93.96" fill="#0286ae"/>
<text x="566.45" y="54.14" text-anchor="middle" font-size="8.2" fill="#c4c4c4">67.6k</text>
<rect x="588.40" y="91.50" width="31.3" height="58.80" fill="#0286ae"/>
<text x="604.05" y="89.30" text-anchor="middle" font-size="8.2" fill="#c4c4c4">42.3k</text>
<rect x="626.00" y="98.45" width="31.3" height="51.85" fill="#0286ae"/>
<text x="641.65" y="96.25" text-anchor="middle" font-size="8.2" fill="#c4c4c4">37.3k</text>
<rect x="663.60" y="107.90" width="31.3" height="42.40" fill="#0286ae"/>
<text x="679.25" y="105.70" text-anchor="middle" font-size="8.2" fill="#c4c4c4">30.5k</text>
<rect x="701.20" y="143.21" width="31.3" height="7.09" fill="#0286ae"/>
<text x="716.85" y="141.01" text-anchor="middle" font-size="8.2" fill="#c4c4c4">5.1k</text>
<line x1="59.60" y1="39.10" x2="59.60" y2="150.80" stroke="#7a7a7a" stroke-width="1"/>
<line x1="56.60" y1="150.30" x2="735.70" y2="150.30" stroke="#7a7a7a" stroke-width="1"/>
<line x1="59.60" y1="150.30" x2="59.60" y2="153.30" stroke="#7a7a7a" stroke-width="1"/>
<line x1="134.77" y1="150.30" x2="134.77" y2="153.30" stroke="#7a7a7a" stroke-width="1"/>
<line x1="209.94" y1="150.30" x2="209.94" y2="153.30" stroke="#7a7a7a" stroke-width="1"/>
<line x1="285.11" y1="150.30" x2="285.11" y2="153.30" stroke="#7a7a7a" stroke-width="1"/>
<line x1="360.28" y1="150.30" x2="360.28" y2="153.30" stroke="#7a7a7a" stroke-width="1"/>
<line x1="435.45" y1="150.30" x2="435.45" y2="153.30" stroke="#7a7a7a" stroke-width="1"/>
<line x1="510.62" y1="150.30" x2="510.62" y2="153.30" stroke="#7a7a7a" stroke-width="1"/>
<line x1="585.79" y1="150.30" x2="585.79" y2="153.30" stroke="#7a7a7a" stroke-width="1"/>
<line x1="660.96" y1="150.30" x2="660.96" y2="153.30" stroke="#7a7a7a" stroke-width="1"/>
<line x1="736.13" y1="150.30" x2="736.13" y2="153.30" stroke="#7a7a7a" stroke-width="1"/>
<line x1="56.60" y1="150.30" x2="59.60" y2="150.30" stroke="#7a7a7a" stroke-width="1"/>
<text x="50.20" y="153.30" text-anchor="end" font-size="8.2" fill="#b4b4b4">0</text>
<line x1="56.60" y1="122.50" x2="59.60" y2="122.50" stroke="#7a7a7a" stroke-width="1"/>
<text x="50.20" y="125.50" text-anchor="end" font-size="8.2" fill="#b4b4b4">20k</text>
<line x1="56.60" y1="94.70" x2="59.60" y2="94.70" stroke="#7a7a7a" stroke-width="1"/>
<text x="50.20" y="97.70" text-anchor="end" font-size="8.2" fill="#b4b4b4">40k</text>
<line x1="56.60" y1="66.90" x2="59.60" y2="66.90" stroke="#7a7a7a" stroke-width="1"/>
<text x="50.20" y="69.90" text-anchor="end" font-size="8.2" fill="#b4b4b4">60k</text>
<line x1="56.60" y1="39.10" x2="59.60" y2="39.10" stroke="#7a7a7a" stroke-width="1"/>
<text x="50.20" y="42.10" text-anchor="end" font-size="8.2" fill="#b4b4b4">80k</text>
<text x="60.20" y="163.20" font-size="8.1" fill="#b4b4b4">Jan 7</text>
<text x="135.37" y="163.20" font-size="8.1" fill="#b4b4b4">Jan 9</text>
<text x="210.54" y="163.20" font-size="8.1" fill="#b4b4b4">Jan 11</text>
<text x="285.71" y="163.20" font-size="8.1" fill="#b4b4b4">Jan 13</text>
<text x="360.88" y="163.20" font-size="8.1" fill="#b4b4b4">Jan 15</text>
<text x="436.05" y="163.20" font-size="8.1" fill="#b4b4b4">Jan 17</text>
<text x="511.22" y="163.20" font-size="8.1" fill="#b4b4b4">Jan 19</text>
<text x="586.39" y="163.20" font-size="8.1" fill="#b4b4b4">Jan 21</text>
<text x="661.56" y="163.20" font-size="8.1" fill="#b4b4b4">Jan 23</text>
<text x="397.00" y="182.00" text-anchor="middle" font-size="8.7" font-weight="bold" fill="#d8d8d8">Time (last 14 Days)</text>
<text transform="translate(27.00 95.20) rotate(-90)" text-anchor="middle" font-size="8.7" font-weight="bold" fill="#d8d8d8">Covid Cases</text>
</svg>
</div>
<div class="tab on" style="left:379.30px;top:528.00px;width:65.30px;">Daily Cases</div>
<div class="tab" style="left:448.50px;top:528.00px;width:81.50px;">Daily Incidence</div>
<div class="tab" style="left:534.30px;top:528.00px;width:88.20px;">7 Days Incidence</div>
<div class="tab" style="left:626.30px;top:528.00px;width:93.70px;">14 Days Incidence</div>
<div class="tab" style="left:723.80px;top:528.00px;width:81.20px;">Trend overview</div>
<div class="tab" style="left:808.80px;top:528.00px;width:70.50px;">Weekly View</div>
</div>
</body></html>
